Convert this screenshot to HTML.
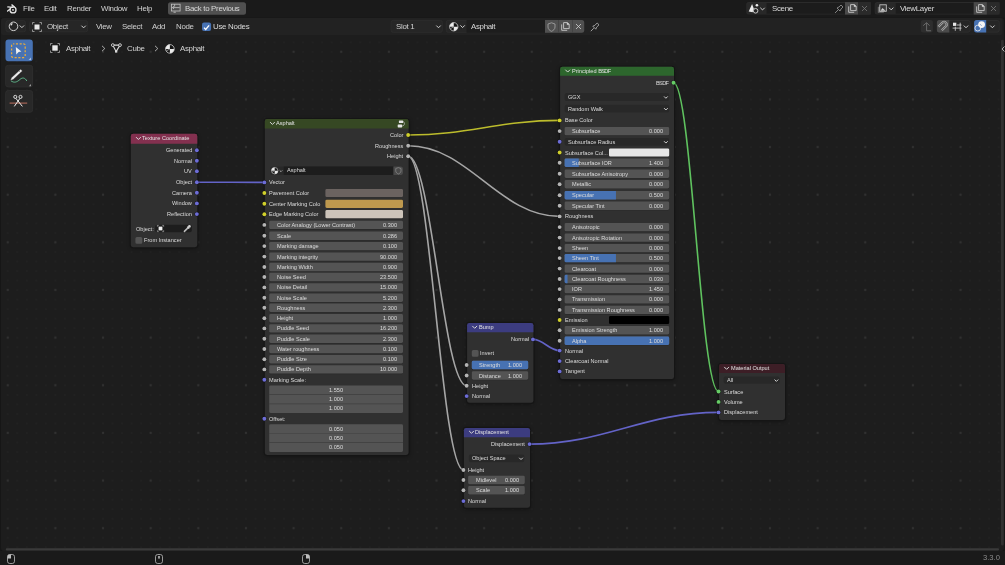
<!DOCTYPE html><html><head><meta charset="utf-8"><style>
html,body{margin:0;padding:0;width:1005px;height:565px;overflow:hidden;background:#1d1d1d}
body{position:relative;font-family:"Liberation Sans",sans-serif}
.t{position:absolute;white-space:nowrap;line-height:10px;height:10px;will-change:transform}
svg{position:absolute;overflow:visible}
</style></head><body>
<svg style="left:-6px;top:-6px" width="1017" height="577"><path d="M6.000 6.000 H1011.000 V571.000 H6.000 V6.000 Z" fill="#161616"/></svg>
<svg style="left:-5px;top:12px" width="1015" height="545"><path d="M9.000 6.000 H1006.000 A3 3 0 0 1 1009.000 9.000 V536.000 A3 3 0 0 1 1006.000 539.000 H9.000 A3 3 0 0 1 6.000 536.000 V9.000 A3 3 0 0 1 9.000 6.000 Z" fill="#1d1d1d"/></svg>
<svg style="left:0;top:0" width="1005" height="565"><defs>
<pattern id="gmin" x="2.996" y="-0.584" width="9.528" height="9.528" patternUnits="userSpaceOnUse"><circle cx="4.764" cy="4.764" r="0.8" fill="#242424"/></pattern>
<pattern id="gmaj" x="-16.06" y="-19.64" width="47.64" height="47.64" patternUnits="userSpaceOnUse"><circle cx="23.82" cy="23.82" r="1.15" fill="#313131"/></pattern>
</defs><rect x="2" y="36" width="1000" height="514" fill="url(#gmin)"/><rect x="2" y="36" width="1000" height="514" fill="url(#gmaj)"/></svg>
<svg style="left:-6px;top:-6px" width="1017" height="30"><path d="M6.000 6.000 H1011.000 V23.500 H6.000 V6.000 Z" fill="#1a1a1a"/></svg>
<svg style="left:-5px;top:12px" width="1014" height="30"><path d="M9.000 6.000 H1004.600 A3 3 0 0 1 1007.600 9.000 V20.300 A3 3 0 0 1 1004.600 23.300 H9.000 A3 3 0 0 1 6.000 20.300 V9.000 A3 3 0 0 1 9.000 6.000 Z" fill="#222222"/></svg>
<svg style="left:6.5px;top:3.5px" width="11" height="11" viewBox="0 0 11 11">
<circle cx="6.0" cy="5.9" r="3.0" fill="none" stroke="#e6e6e6" stroke-width="1.3"/>
<circle cx="6.0" cy="5.9" r="0.9" fill="#e6e6e6"/>
<path d="M4.9 0.9 L7.2 2.7 M0.8 2.95 L5.6 3.4 M0.6 7.0 L3.5 4.8" stroke="#e6e6e6" stroke-width="1.35" stroke-linecap="round"/>
</svg>
<div class="t" style="left:23.00px;top:3.60px;font-size:7.9px;color:#d2d2d2;letter-spacing:-0.3px;">File</div>
<div class="t" style="left:43.80px;top:3.60px;font-size:7.9px;color:#d2d2d2;letter-spacing:-0.3px;">Edit</div>
<div class="t" style="left:66.60px;top:3.60px;font-size:7.9px;color:#d2d2d2;letter-spacing:-0.3px;">Render</div>
<div class="t" style="left:100.60px;top:3.60px;font-size:7.9px;color:#d2d2d2;letter-spacing:-0.3px;">Window</div>
<div class="t" style="left:137.40px;top:3.60px;font-size:7.9px;color:#d2d2d2;letter-spacing:-0.3px;">Help</div>
<svg style="left:162px;top:-4px" width="90" height="25"><path d="M8.500 6.200 H81.500 A2.5 2.5 0 0 1 84.000 8.700 V16.200 A2.5 2.5 0 0 1 81.500 18.700 H8.500 A2.5 2.5 0 0 1 6.000 16.200 V8.700 A2.5 2.5 0 0 1 8.500 6.200 Z" fill="#505050"/></svg>
<svg style="left:170px;top:3px" width="12" height="12" viewBox="0 0 12 12">
<rect x="1.5" y="1.2" width="8.6" height="6.8" fill="none" stroke="#c4c4c4" stroke-width="0.8"/>
<path d="M4.6 1.2 V3.6 M2.3 4.6 H9.6 M4 3.2 L2.5 4.6 L4 6" fill="none" stroke="#c4c4c4" stroke-width="0.8"/>
<path d="M3.5 9.2 H5.8" stroke="#c4c4c4" stroke-width="0.9"/></svg>
<div class="t" style="left:184.90px;top:3.60px;font-size:7.9px;color:#d8d8d8;letter-spacing:-0.3px;">Back to Previous</div>
<svg style="left:740px;top:-4px" width="137" height="25"><path d="M8.800 6.100 H128.500 A2.5 2.5 0 0 1 131.000 8.600 V16.100 A2.5 2.5 0 0 1 128.500 18.600 H8.800 A2.5 2.5 0 0 1 6.300 16.100 V8.600 A2.5 2.5 0 0 1 8.800 6.100 Z" fill="#2b2b2b"/></svg>
<svg style="left:741px;top:-4px" width="136" height="24"><path d="M8.100 6.900 H127.200 A2 2 0 0 1 129.200 8.900 V15.800 A2 2 0 0 1 127.200 17.800 H8.100 A2 2 0 0 1 6.100 15.800 V8.900 A2 2 0 0 1 8.100 6.900 Z" fill="#282828"/></svg>
<svg style="left:760px;top:-4px" width="91" height="24"><path d="M6.500 6.900 H85.000 V17.800 H6.500 V6.900 Z" fill="#1c1c1c"/></svg>
<svg style="left:839px;top:-4px" width="25" height="25"><path d="M6.000 6.100 H19.000 V18.600 H6.000 V6.100 Z" fill="#4a4a4a"/></svg>
<svg style="left:852px;top:-4px" width="25" height="25"><path d="M6.000 6.100 H19.000 V18.600 H6.000 V6.100 Z" fill="#2a2a2a"/></svg>
<div class="t" style="left:771.50px;top:4.15px;font-size:7.9px;color:#dadada;letter-spacing:-0.3px;">Scene</div>
<svg style="left:852px;top:-4px" width="25" height="25"><path d="M6.000 6.100 H16.500 A2.5 2.5 0 0 1 19.000 8.600 V16.100 A2.5 2.5 0 0 1 16.500 18.600 H6.000 V6.100 Z" fill="#2a2a2a"/></svg>
<svg style="left:744px;top:0px" width="20" height="17">
<path d="M4.7 11.4 L8.1 4.0 L9.9 9 L8.6 12.2 Z" fill="#ececec"/>
<circle cx="12.9" cy="5.3" r="1.3" fill="#ececec"/>
<circle cx="11.6" cy="10.8" r="2.3" fill="#262626" stroke="#c8c8c8" stroke-width="1"/></svg>
<svg style="left:758px;top:5px" width="9" height="9"><path d="M2.600 3.050 L4.500 4.950 L6.400 3.050" fill="none" stroke="#cfcfcf" stroke-width="1.0" stroke-linecap="round" stroke-linejoin="round"/></svg>
<svg style="left:834px;top:3.5px" width="10" height="10" viewBox="0 0 10 10">
<path d="M1 9 L4 6 M3 4 L6 7 L7 5 L9 3 L7 1 L5 3 Z" fill="none" stroke="#9a9a9a" stroke-width="0.8"/></svg>
<svg style="left:847.5px;top:4px" width="9" height="9" viewBox="0 0 9 9">
<path d="M2.6 0.6 H6.4 L8.2 2.4 V6.6 H2.6 Z" fill="none" stroke="#d0d0d0" stroke-width="0.85"/>
<path d="M6.2 0.6 V2.6 H8.2" fill="#f0f0f0" stroke="#d0d0d0" stroke-width="0.6"/>
<path d="M0.7 2.4 V8.3 H6.2" fill="none" stroke="#d0d0d0" stroke-width="0.85"/></svg>
<svg style="left:861px;top:5px" width="7" height="7" viewBox="0 0 7 7">
<path d="M1 1 L6 6 M6 1 L1 6" stroke="#7a7a7a" stroke-width="0.8"/></svg>
<svg style="left:868px;top:-4px" width="138" height="25"><path d="M9.200 6.100 H129.100 A2.5 2.5 0 0 1 131.600 8.600 V16.100 A2.5 2.5 0 0 1 129.100 18.600 H9.200 A2.5 2.5 0 0 1 6.700 16.100 V8.600 A2.5 2.5 0 0 1 9.200 6.100 Z" fill="#2b2b2b"/></svg>
<svg style="left:869px;top:-4px" width="136" height="24"><path d="M8.500 6.900 H127.800 A2 2 0 0 1 129.800 8.900 V15.800 A2 2 0 0 1 127.800 17.800 H8.500 A2 2 0 0 1 6.500 15.800 V8.900 A2 2 0 0 1 8.500 6.900 Z" fill="#282828"/></svg>
<svg style="left:889px;top:-4px" width="91" height="24"><path d="M6.800 6.900 H84.700 V17.800 H6.800 V6.900 Z" fill="#1c1c1c"/></svg>
<svg style="left:967px;top:-4px" width="26" height="25"><path d="M6.700 6.100 H19.900 V18.600 H6.700 V6.100 Z" fill="#4a4a4a"/></svg>
<svg style="left:980px;top:-4px" width="26" height="25"><path d="M6.900 6.100 H19.600 V18.600 H6.900 V6.100 Z" fill="#2a2a2a"/></svg>
<div class="t" style="left:900.30px;top:4.15px;font-size:7.9px;color:#dadada;letter-spacing:-0.3px;">ViewLayer</div>
<svg style="left:877px;top:3.5px" width="11" height="10" viewBox="0 0 11 10">
<rect x="0.8" y="2.8" width="6" height="6" fill="#6a6a6a"/><rect x="2.8" y="0.8" width="6.5" height="6.5" fill="#3a3a3a" stroke="#cfcfcf" stroke-width="0.8"/>
<path d="M3.5 6.8 L5.5 4 L8.5 6.8Z" fill="#cfcfcf"/></svg>
<svg style="left:887px;top:4px" width="9" height="9"><path d="M2.300 3.950 L4.200 5.850 L6.100 3.950" fill="none" stroke="#d0d0d0" stroke-width="1.0" stroke-linecap="round" stroke-linejoin="round"/></svg>
<svg style="left:976px;top:4px" width="9" height="9" viewBox="0 0 9 9">
<path d="M2.6 0.6 H6.4 L8.2 2.4 V6.6 H2.6 Z" fill="none" stroke="#d0d0d0" stroke-width="0.85"/>
<path d="M6.2 0.6 V2.6 H8.2" fill="#f0f0f0" stroke="#d0d0d0" stroke-width="0.6"/>
<path d="M0.7 2.4 V8.3 H6.2" fill="none" stroke="#d0d0d0" stroke-width="0.85"/></svg>
<svg style="left:990px;top:5px" width="7" height="7" viewBox="0 0 7 7">
<path d="M1 1 L6 6 M6 1 L1 6" stroke="#7a7a7a" stroke-width="0.8"/></svg>
<svg style="left:-1px;top:14px" width="33" height="25"><path d="M9.100 6.300 H24.400 A2.5 2.5 0 0 1 26.900 8.800 V15.700 A2.5 2.5 0 0 1 24.400 18.200 H9.100 A2.5 2.5 0 0 1 6.600 15.700 V8.800 A2.5 2.5 0 0 1 9.100 6.300 Z" fill="#262626"/><path d="M9.100 6.650 H24.400 A2.15 2.15 0 0 1 26.550 8.800 V15.700 A2.15 2.15 0 0 1 24.400 17.850 H9.100 A2.15 2.15 0 0 1 6.950 15.700 V8.800 A2.15 2.15 0 0 1 9.100 6.650 Z" fill="none" stroke="#2e2e2e" stroke-width="0.7"/></svg>
<svg style="left:7.5px;top:21px" width="11" height="11" viewBox="0 0 11 11">
<circle cx="5.5" cy="5.3" r="4.3" fill="none" stroke="#d2d2d2" stroke-width="1"/>
<path d="M2.7 4.2 L4.3 2.4" stroke="#e6e6e6" stroke-width="1.4"/></svg>
<svg style="left:17px;top:22px" width="9" height="9"><path d="M3.000 3.750 L4.900 5.650 L6.800 3.750" fill="none" stroke="#d0d0d0" stroke-width="1.0" stroke-linecap="round" stroke-linejoin="round"/></svg>
<svg style="left:23px;top:14px" width="71" height="25"><path d="M9.000 6.300 H62.500 A2.5 2.5 0 0 1 65.000 8.800 V15.700 A2.5 2.5 0 0 1 62.500 18.200 H9.000 A2.5 2.5 0 0 1 6.500 15.700 V8.800 A2.5 2.5 0 0 1 9.000 6.300 Z" fill="#262626"/><path d="M9.000 6.650 H62.500 A2.15 2.15 0 0 1 64.650 8.800 V15.700 A2.15 2.15 0 0 1 62.500 17.850 H9.000 A2.15 2.15 0 0 1 6.850 15.700 V8.800 A2.15 2.15 0 0 1 9.000 6.650 Z" fill="none" stroke="#2e2e2e" stroke-width="0.7"/></svg>
<svg style="left:32px;top:21.5px" width="10" height="10" viewBox="0 0 10 10">
<path d="M0.5 2.5 V0.5 H2.5 M7.5 0.5 H9.5 V2.5 M9.5 7.5 V9.5 H7.5 M2.5 9.5 H0.5 V7.5" fill="none" stroke="#bdbdbd" stroke-width="0.7"/>
<rect x="2.5" y="2.5" width="5" height="5" fill="#e8e8e8"/></svg>
<div class="t" style="left:46.60px;top:22.00px;font-size:7.9px;color:#d0d0d0;letter-spacing:-0.3px;">Object</div>
<svg style="left:79px;top:22px" width="9" height="9"><path d="M2.700 3.950 L4.600 5.850 L6.500 3.950" fill="none" stroke="#d0d0d0" stroke-width="1.0" stroke-linecap="round" stroke-linejoin="round"/></svg>
<div class="t" style="left:95.80px;top:22.00px;font-size:7.9px;color:#d0d0d0;letter-spacing:-0.3px;">View</div>
<div class="t" style="left:121.90px;top:22.00px;font-size:7.9px;color:#d0d0d0;letter-spacing:-0.3px;">Select</div>
<div class="t" style="left:152.20px;top:22.00px;font-size:7.9px;color:#d0d0d0;letter-spacing:-0.3px;">Add</div>
<div class="t" style="left:175.60px;top:22.00px;font-size:7.9px;color:#d0d0d0;letter-spacing:-0.3px;">Node</div>
<svg style="left:196px;top:16px" width="22" height="21"><path d="M8.000 6.500 H13.100 A2 2 0 0 1 15.100 8.500 V13.000 A2 2 0 0 1 13.100 15.000 H8.000 A2 2 0 0 1 6.000 13.000 V8.500 A2 2 0 0 1 8.000 6.500 Z" fill="#4772b3"/></svg>
<svg style="left:202px;top:22.5px" width="9" height="9" viewBox="0 0 9 9">
<path d="M2 4.6 L3.7 6.4 L7.1 2.4" fill="none" stroke="#ffffff" stroke-width="1.35"/></svg>
<div class="t" style="left:213.00px;top:22.00px;font-size:7.9px;color:#dadada;letter-spacing:-0.3px;">Use Nodes</div>
<svg style="left:384px;top:14px" width="65" height="25"><path d="M9.200 6.000 H56.200 A2.5 2.5 0 0 1 58.700 8.500 V16.200 A2.5 2.5 0 0 1 56.200 18.700 H9.200 A2.5 2.5 0 0 1 6.700 16.200 V8.500 A2.5 2.5 0 0 1 9.200 6.000 Z" fill="#262626"/><path d="M9.200 6.350 H56.200 A2.15 2.15 0 0 1 58.350 8.500 V16.200 A2.15 2.15 0 0 1 56.200 18.350 H9.200 A2.15 2.15 0 0 1 7.050 16.200 V8.500 A2.15 2.15 0 0 1 9.200 6.350 Z" fill="none" stroke="#2e2e2e" stroke-width="0.7"/></svg>
<div class="t" style="left:395.50px;top:22.00px;font-size:7.9px;color:#d0d0d0;letter-spacing:-0.3px;">Slot 1</div>
<svg style="left:434px;top:22px" width="9" height="9"><path d="M2.600 3.850 L4.500 5.750 L6.400 3.850" fill="none" stroke="#d0d0d0" stroke-width="1.0" stroke-linecap="round" stroke-linejoin="round"/></svg>
<svg style="left:439px;top:14px" width="152" height="25"><path d="M9.400 6.000 H142.700 A2.5 2.5 0 0 1 145.200 8.500 V16.200 A2.5 2.5 0 0 1 142.700 18.700 H9.400 A2.5 2.5 0 0 1 6.900 16.200 V8.500 A2.5 2.5 0 0 1 9.400 6.000 Z" fill="#262626"/><path d="M9.400 6.350 H142.700 A2.15 2.15 0 0 1 144.850 8.500 V16.200 A2.15 2.15 0 0 1 142.700 18.350 H9.400 A2.15 2.15 0 0 1 7.250 16.200 V8.500 A2.15 2.15 0 0 1 9.400 6.350 Z" fill="none" stroke="#2e2e2e" stroke-width="0.7"/></svg>
<svg style="left:460px;top:14px" width="91" height="25"><path d="M6.600 6.000 H85.000 V18.700 H6.600 V6.000 Z" fill="#1d1d1d"/></svg>
<svg style="left:539px;top:14px" width="52" height="25"><path d="M6.000 6.000 H42.700 A2.5 2.5 0 0 1 45.200 8.500 V16.200 A2.5 2.5 0 0 1 42.700 18.700 H6.000 V6.000 Z" fill="#505050"/></svg>
<svg style="left:448.5px;top:21.8px" width="9.5" height="9.5" viewBox="0 0 10 10">
<circle cx="5" cy="5" r="4.4" fill="#151515"/>
<path d="M5 5 V0.6 A4.4 4.4 0 0 0 0.6 5 Z" fill="#ececec"/><path d="M5 5 H9.4 A4.4 4.4 0 0 1 5 9.4 Z" fill="#ececec"/>
<path d="M5 5 L1.3 7.2" stroke="#bbbbbb" stroke-width="0.7"/>
<circle cx="5" cy="5" r="4.4" fill="none" stroke="#d8d8d8" stroke-width="0.8"/></svg>
<svg style="left:458px;top:22px" width="9" height="9"><path d="M2.700 3.650 L4.600 5.550 L6.500 3.650" fill="none" stroke="#d0d0d0" stroke-width="1.0" stroke-linecap="round" stroke-linejoin="round"/></svg>
<div class="t" style="left:471.30px;top:22.00px;font-size:7.9px;color:#dadada;letter-spacing:-0.3px;">Asphalt</div>
<svg style="left:547.3px;top:21.5px" width="9.0" height="10.0" viewBox="0 0 9 10">
<path d="M4.5 0.8 L8 2 V5 C8 7.2 6.2 8.6 4.5 9.3 C2.8 8.6 1 7.2 1 5 V2 Z" fill="none" stroke="#a8a8a8" stroke-width="0.8"/></svg>
<div style="position:absolute;left:558.3px;top:20px;width:0.5px;height:12.7px;background:#444"></div>
<div style="position:absolute;left:571.5px;top:20px;width:0.5px;height:12.7px;background:#444"></div>
<svg style="left:560.5px;top:22px" width="9" height="9" viewBox="0 0 9 9">
<path d="M2.6 0.6 H6.4 L8.2 2.4 V6.6 H2.6 Z" fill="none" stroke="#d0d0d0" stroke-width="0.85"/>
<path d="M6.2 0.6 V2.6 H8.2" fill="#f0f0f0" stroke="#d0d0d0" stroke-width="0.6"/>
<path d="M0.7 2.4 V8.3 H6.2" fill="none" stroke="#d0d0d0" stroke-width="0.85"/></svg>
<svg style="left:574.5px;top:23px" width="7" height="7" viewBox="0 0 7 7">
<path d="M1 1 L6 6 M6 1 L1 6" stroke="#d0d0d0" stroke-width="0.8"/></svg>
<svg style="left:589.5px;top:21.5px" width="10" height="10" viewBox="0 0 10 10">
<path d="M0.8 9.2 L3.8 6.2 M2.8 4.2 L5.8 7.2 L6.6 5.2 L9 2.8 L7.2 1 L4.8 3.4 Z" fill="none" stroke="#bdbdbd" stroke-width="0.8"/></svg>
<svg style="left:914px;top:14px" width="25" height="25"><path d="M9.300 6.100 H16.400 A2.5 2.5 0 0 1 18.900 8.600 V16.000 A2.5 2.5 0 0 1 16.400 18.500 H9.300 A2.5 2.5 0 0 1 6.800 16.000 V8.600 A2.5 2.5 0 0 1 9.300 6.100 Z" fill="#2e2e2e"/></svg>
<svg style="left:915px;top:16px" width="20" height="20">
<path d="M11.6 7.2 V14.8 H15.7 M8.5 9.4 L11.6 6.7 L14.3 9.4" fill="none" stroke="#707070" stroke-width="0.9" stroke-linejoin="round" stroke-linecap="round"/></svg>
<svg style="left:930px;top:14px" width="47" height="25"><path d="M9.400 6.100 H38.000 A2.5 2.5 0 0 1 40.500 8.600 V16.000 A2.5 2.5 0 0 1 38.000 18.500 H9.400 A2.5 2.5 0 0 1 6.900 16.000 V8.600 A2.5 2.5 0 0 1 9.400 6.100 Z" fill="#262626"/><path d="M9.400 6.450 H38.000 A2.15 2.15 0 0 1 40.150 8.600 V16.000 A2.15 2.15 0 0 1 38.000 18.150 H9.400 A2.15 2.15 0 0 1 7.250 16.000 V8.600 A2.15 2.15 0 0 1 9.400 6.450 Z" fill="none" stroke="#303030" stroke-width="0.7"/></svg>
<svg style="left:930px;top:14px" width="26" height="25"><path d="M9.400 6.100 H19.300 V18.500 H9.400 A2.5 2.5 0 0 1 6.900 16.000 V8.600 A2.5 2.5 0 0 1 9.400 6.100 Z" fill="#4a4a4a"/></svg>
<svg style="left:935px;top:16px" width="20" height="20">
<path d="M3.33 10.73 L7.33 6.73 A2.5 2.5 0 0 1 10.87 10.27 L6.87 14.27" fill="none" stroke="#a8a8a8" stroke-width="2.3" stroke-linecap="butt"/>
<path d="M3.33 10.73 L7.33 6.73 A2.5 2.5 0 0 1 10.87 10.27 L6.87 14.27" fill="none" stroke="#4a4a4a" stroke-width="0.8" stroke-linecap="butt"/></svg>
<svg style="left:950px;top:20px" width="14" height="14">
<rect x="3" y="2.7" width="3.3" height="3.2" fill="#e6e6e6"/>
<path d="M5.3 6.7 V10.8 M10.2 2.7 V10.8 M7 5 H11.5 M2.6 8.1 H11.5" fill="none" stroke="#d0d0d0" stroke-width="0.85"/></svg>
<svg style="left:962px;top:22px" width="9" height="9"><path d="M2.100 3.850 L4.000 5.750 L5.900 3.850" fill="none" stroke="#d0d0d0" stroke-width="1.0" stroke-linecap="round" stroke-linejoin="round"/></svg>
<svg style="left:968px;top:14px" width="38" height="25"><path d="M8.600 6.100 H29.100 A2.5 2.5 0 0 1 31.600 8.600 V16.000 A2.5 2.5 0 0 1 29.100 18.500 H8.600 A2.5 2.5 0 0 1 6.100 16.000 V8.600 A2.5 2.5 0 0 1 8.600 6.100 Z" fill="#262626"/><path d="M8.600 6.450 H29.100 A2.15 2.15 0 0 1 31.250 8.600 V16.000 A2.15 2.15 0 0 1 29.100 18.150 H8.600 A2.15 2.15 0 0 1 6.450 16.000 V8.600 A2.15 2.15 0 0 1 8.600 6.450 Z" fill="none" stroke="#303030" stroke-width="0.7"/></svg>
<svg style="left:968px;top:14px" width="25" height="25"><path d="M8.600 6.100 H18.200 V18.500 H8.600 A2.5 2.5 0 0 1 6.100 16.000 V8.600 A2.5 2.5 0 0 1 8.600 6.100 Z" fill="#4772b3"/></svg>
<svg style="left:972px;top:18px" width="16" height="16">
<circle cx="5.8" cy="10.1" r="2.9" fill="none" stroke="#e8e8e8" stroke-width="0.85"/>
<circle cx="9.6" cy="6.6" r="3.4" fill="#f4f4f4"/>
<path d="M8.2 6.2 L9.6 7.8" stroke="#4772b3" stroke-width="0.6"/></svg>
<svg style="left:988px;top:22px" width="9" height="9"><path d="M2.500 3.850 L4.400 5.750 L6.300 3.850" fill="none" stroke="#d0d0d0" stroke-width="1.0" stroke-linecap="round" stroke-linejoin="round"/></svg>
<svg style="left:-1px;top:33px" width="40" height="35"><path d="M9.500 6.600 H30.800 A3 3 0 0 1 33.800 9.600 V25.300 A3 3 0 0 1 30.800 28.300 H9.500 A3 3 0 0 1 6.500 25.300 V9.600 A3 3 0 0 1 9.500 6.600 Z" fill="#4772b3"/></svg>
<svg style="left:8px;top:41.5px" width="24" height="19" viewBox="0 0 24 19">
<rect x="3.6" y="1.8" width="13.6" height="13.7" rx="1.6" fill="none" stroke="#e9ac3c" stroke-width="1.25" stroke-dasharray="2.1 1.6" stroke-dashoffset="1"/>
<path d="M7.8 5 L13.4 9.6 L10.6 9.9 L8.3 12.6 Z" fill="#f0f0f0"/>
<path d="M23 15.6 L20.6 18 H23 Z" fill="#a9c0e0"/></svg>
<svg style="left:-1px;top:58px" width="40" height="36"><path d="M9.300 6.900 H31.000 A3 3 0 0 1 34.000 9.900 V26.300 A3 3 0 0 1 31.000 29.300 H9.300 A3 3 0 0 1 6.300 26.300 V9.900 A3 3 0 0 1 9.300 6.900 Z" fill="#282828"/><path d="M9.300 7.250 H31.000 A2.65 2.65 0 0 1 33.650 9.900 V26.300 A2.65 2.65 0 0 1 31.000 28.950 H9.300 A2.65 2.65 0 0 1 6.650 26.300 V9.900 A2.65 2.65 0 0 1 9.300 7.250 Z" fill="none" stroke="#2f2f2f" stroke-width="0.7"/></svg>
<svg style="left:8px;top:66.5px" width="24" height="20" viewBox="0 0 24 20">
<path d="M3 13.8 C6 16.2 9 15.2 12 12.4 C14.5 10.2 17 10.6 18.8 14" fill="none" stroke="#5fb58a" stroke-width="1"/>
<path d="M2.5 13.2 L5.1 12.5 L14.3 4.0 L12.7 2.2 L3.5 10.7 Z" fill="#ececec" stroke="#3a3a3a" stroke-width="0.3"/>
<path d="M12.4 5.4 L11.2 4.1" stroke="#555" stroke-width="0.6"/>
<path d="M23 17 L20.8 19.2 H23 Z" fill="#9a9a9a"/></svg>
<svg style="left:-1px;top:84px" width="40" height="35"><path d="M9.300 6.200 H31.000 A3 3 0 0 1 34.000 9.200 V25.600 A3 3 0 0 1 31.000 28.600 H9.300 A3 3 0 0 1 6.300 25.600 V9.200 A3 3 0 0 1 9.300 6.200 Z" fill="#282828"/><path d="M9.300 6.550 H31.000 A2.65 2.65 0 0 1 33.650 9.200 V25.600 A2.65 2.65 0 0 1 31.000 28.250 H9.300 A2.65 2.65 0 0 1 6.650 25.600 V9.200 A2.65 2.65 0 0 1 9.300 6.550 Z" fill="none" stroke="#2f2f2f" stroke-width="0.7"/></svg>
<svg style="left:8px;top:92px" width="24" height="20" viewBox="0 0 24 20">
<path d="M1.6 11.1 H19.2" stroke="#b06a5a" stroke-width="1.1"/>
<circle cx="7.3" cy="4.9" r="1.55" fill="none" stroke="#eeeeee" stroke-width="0.9"/>
<circle cx="12.5" cy="4.9" r="1.55" fill="none" stroke="#eeeeee" stroke-width="0.9"/>
<path d="M7.9 6.4 L14.4 14.4 M11.9 6.4 L6.3 14.4" stroke="#eeeeee" stroke-width="1"/></svg>
<svg style="left:49.9px;top:43.2px" width="10" height="10" viewBox="0 0 10 10">
<path d="M0.5 2.5 V0.5 H2.5 M7.5 0.5 H9.5 V2.5 M9.5 7.5 V9.5 H7.5 M2.5 9.5 H0.5 V7.5" fill="none" stroke="#bdbdbd" stroke-width="0.7"/>
<rect x="2.3" y="2.3" width="5.4" height="5.4" fill="#e8e8e8"/></svg>
<div class="t" style="left:65.60px;top:44.00px;font-size:7.9px;color:#d4d4d4;letter-spacing:-0.3px;">Asphalt</div>
<svg style="left:100.5px;top:45px" width="5" height="7" viewBox="0 0 5 7"><path d="M1 0.8 L3.8 3.5 L1 6.2" fill="none" stroke="#cfcfcf" stroke-width="0.8"/></svg>
<svg style="left:110.7px;top:43px" width="11" height="11" viewBox="0 0 11 11">
<path d="M1.7 2.1 L9 2.1 L5.1 8.6 Z" fill="none" stroke="#d8d8d8" stroke-width="1.1" stroke-linejoin="round"/>
<circle cx="1.8" cy="2.1" r="1.4" fill="#1d1d1d" stroke="#d8d8d8" stroke-width="0.9"/>
<circle cx="9" cy="2.1" r="1.4" fill="#1d1d1d" stroke="#d8d8d8" stroke-width="0.9"/>
<rect x="4" y="7.6" width="2.3" height="2" fill="#d8d8d8"/></svg>
<div class="t" style="left:126.90px;top:44.00px;font-size:7.9px;color:#d4d4d4;letter-spacing:-0.3px;">Cube</div>
<svg style="left:154.3px;top:45px" width="5" height="7" viewBox="0 0 5 7"><path d="M1 0.8 L3.8 3.5 L1 6.2" fill="none" stroke="#cfcfcf" stroke-width="0.8"/></svg>
<svg style="left:164.5px;top:43.5px" width="9.8" height="9.8" viewBox="0 0 10 10">
<circle cx="5" cy="5" r="4.4" fill="#151515"/>
<path d="M5 5 V0.6 A4.4 4.4 0 0 0 0.6 5 Z" fill="#ececec"/><path d="M5 5 H9.4 A4.4 4.4 0 0 1 5 9.4 Z" fill="#ececec"/>
<path d="M5 5 L1.3 7.2" stroke="#bbbbbb" stroke-width="0.7"/>
<circle cx="5" cy="5" r="4.4" fill="none" stroke="#d8d8d8" stroke-width="0.8"/></svg>
<div class="t" style="left:179.70px;top:44.00px;font-size:7.9px;color:#d4d4d4;letter-spacing:-0.3px;">Asphalt</div>
<svg style="left:0;top:0" width="1005" height="565"><path d="M197.0 182.2 C223.94 182.2 237.41000000000003 182.4 264.35 182.4" fill="none" stroke="#6363c7" stroke-width="1.6"/><path d="M408.15 135 C468.75 135 499.04999999999995 120.4 559.65 120.4" fill="none" stroke="#bcbc2c" stroke-width="1.6"/><path d="M408.15 145.8 C468.75 145.8 499.04999999999995 216.4 559.65 216.4" fill="none" stroke="#a6a6a6" stroke-width="1.6"/><path d="M408.15 156.2 C431.54999999999995 156.2 443.25 385.7 466.65 385.7" fill="none" stroke="#a6a6a6" stroke-width="1.6"/><path d="M408.15 156.2 C430.27 156.2 441.33 470 463.45 470" fill="none" stroke="#a6a6a6" stroke-width="1.6"/><path d="M532.95 339.4 C543.63 339.4 548.97 350.6 559.65 350.6" fill="none" stroke="#6363c7" stroke-width="1.6"/><path d="M673.55 82.8 C691.55 82.8 700.55 391.5 718.55 391.5" fill="none" stroke="#5fc25f" stroke-width="1.6"/><path d="M529.55 444.1 C605.15 444.1 642.9499999999999 412.4 718.55 412.4" fill="none" stroke="#6363c7" stroke-width="1.6"/></svg>
<div style="position:absolute;left:130.80px;top:133.80px;width:66.50px;height:113.40px;border-radius:2.5px;box-shadow:0 1px 4px rgba(0,0,0,0.45)"></div>
<svg style="left:123px;top:126px" width="82" height="129"><path d="M10.100 6.700 H72.000 A3.4 3.4 0 0 1 75.400 10.100 V118.900 A3.4 3.4 0 0 1 72.000 122.300 H10.100 A3.4 3.4 0 0 1 6.700 118.900 V10.100 A3.4 3.4 0 0 1 10.100 6.700 Z" fill="#151515"/></svg>
<svg style="left:124px;top:127px" width="80" height="127"><path d="M9.200 6.800 H70.900 A2.4 2.4 0 0 1 73.300 9.200 V117.800 A2.4 2.4 0 0 1 70.900 120.200 H9.200 A2.4 2.4 0 0 1 6.800 117.800 V9.200 A2.4 2.4 0 0 1 9.200 6.800 Z" fill="#303030"/></svg>
<svg style="left:124px;top:127px" width="80" height="23"><path d="M9.200 6.800 H70.900 A2.4 2.4 0 0 1 73.300 9.200 V16.700 H6.800 V9.200 A2.4 2.4 0 0 1 9.200 6.800 Z" fill="#83304f"/></svg>
<svg style="left:134px;top:134px" width="9" height="9"><path d="M2.300 3.400 L4.400 5.500 L6.500 3.400" fill="none" stroke="#d8d8d8" stroke-width="1.0" stroke-linecap="round" stroke-linejoin="round"/></svg>
<div class="t" style="left:142.30px;top:133.05px;font-size:5.6px;color:#e2e2e2;">Texture Coordinate</div>
<div class="t" style="right:812.90px;top:145.30px;font-size:5.6px;color:#dcdcdc;text-align:right;">Generated</div>
<svg style="left:192px;top:146px" width="9" height="9"><circle cx="4.850" cy="4.300" r="2.35" fill="rgba(0,0,0,0.55)"/><circle cx="4.850" cy="4.300" r="1.95" fill="#6d6dd6"/></svg>
<div class="t" style="right:812.90px;top:155.70px;font-size:5.6px;color:#dcdcdc;text-align:right;">Normal</div>
<svg style="left:192px;top:156px" width="9" height="9"><circle cx="4.850" cy="4.700" r="2.35" fill="rgba(0,0,0,0.55)"/><circle cx="4.850" cy="4.700" r="1.95" fill="#6d6dd6"/></svg>
<div class="t" style="right:812.90px;top:166.30px;font-size:5.6px;color:#dcdcdc;text-align:right;">UV</div>
<svg style="left:192px;top:167px" width="9" height="9"><circle cx="4.850" cy="4.300" r="2.35" fill="rgba(0,0,0,0.55)"/><circle cx="4.850" cy="4.300" r="1.95" fill="#6d6dd6"/></svg>
<div class="t" style="right:812.90px;top:177.20px;font-size:5.6px;color:#dcdcdc;text-align:right;">Object</div>
<svg style="left:192px;top:178px" width="9" height="9"><circle cx="4.850" cy="4.200" r="2.35" fill="rgba(0,0,0,0.55)"/><circle cx="4.850" cy="4.200" r="1.95" fill="#6d6dd6"/></svg>
<div class="t" style="right:812.90px;top:187.80px;font-size:5.6px;color:#dcdcdc;text-align:right;">Camera</div>
<svg style="left:192px;top:188px" width="9" height="9"><circle cx="4.850" cy="4.800" r="2.35" fill="rgba(0,0,0,0.55)"/><circle cx="4.850" cy="4.800" r="1.95" fill="#6d6dd6"/></svg>
<div class="t" style="right:812.90px;top:198.40px;font-size:5.6px;color:#dcdcdc;text-align:right;">Window</div>
<svg style="left:192px;top:199px" width="9" height="9"><circle cx="4.850" cy="4.400" r="2.35" fill="rgba(0,0,0,0.55)"/><circle cx="4.850" cy="4.400" r="1.95" fill="#6d6dd6"/></svg>
<div class="t" style="right:812.90px;top:209.10px;font-size:5.6px;color:#dcdcdc;text-align:right;">Reflection</div>
<svg style="left:192px;top:210px" width="9" height="9"><circle cx="4.850" cy="4.100" r="2.35" fill="rgba(0,0,0,0.55)"/><circle cx="4.850" cy="4.100" r="1.95" fill="#6d6dd6"/></svg>
<div class="t" style="left:135.60px;top:223.50px;font-size:5.6px;color:#dcdcdc;">Object:</div>
<svg style="left:149px;top:218px" width="49" height="21"><path d="M8.200 6.700 H40.800 A2 2 0 0 1 42.800 8.700 V12.200 A2 2 0 0 1 40.800 14.200 H8.200 A2 2 0 0 1 6.200 12.200 V8.700 A2 2 0 0 1 8.200 6.700 Z" fill="#1d1d1d"/></svg>
<svg style="left:157px;top:225px" width="7" height="7" viewBox="0 0 10 10">
<path d="M0.5 2.5 V0.5 H2.5 M7.5 0.5 H9.5 V2.5 M9.5 7.5 V9.5 H7.5 M2.5 9.5 H0.5 V7.5" fill="none" stroke="#bdbdbd" stroke-width="0.9"/>
<rect x="2.3" y="2.3" width="5.4" height="5.4" fill="#f0f0f0"/></svg>
<svg style="left:182px;top:223px" width="10" height="10">
<path d="M2.4 8.4 L6.2 4.6" stroke="#bdbdbd" stroke-width="1.5" stroke-linecap="round"/>
<path d="M5.2 3.6 L7.2 5.6" stroke="#d6d6d6" stroke-width="1.2"/>
<circle cx="7.4" cy="3.4" r="1.35" fill="#d6d6d6"/></svg>
<svg style="left:129px;top:231px" width="20" height="19"><path d="M7.900 6.000 H11.800 A1.5 1.5 0 0 1 13.300 7.500 V11.200 A1.5 1.5 0 0 1 11.800 12.700 H7.900 A1.5 1.5 0 0 1 6.400 11.200 V7.500 A1.5 1.5 0 0 1 7.900 6.000 Z" fill="#545454"/></svg>
<div class="t" style="left:144.00px;top:235.40px;font-size:5.6px;color:#dcdcdc;">From Instancer</div>
<div style="position:absolute;left:264.80px;top:119.00px;width:143.80px;height:335.90px;border-radius:2.5px;box-shadow:0 1px 4px rgba(0,0,0,0.45)"></div>
<svg style="left:257px;top:111px" width="159" height="351"><path d="M10.100 6.900 H149.300 A3.4 3.4 0 0 1 152.700 10.300 V341.600 A3.4 3.4 0 0 1 149.300 345.000 H10.100 A3.4 3.4 0 0 1 6.700 341.600 V10.300 A3.4 3.4 0 0 1 10.100 6.900 Z" fill="#151515"/></svg>
<svg style="left:258px;top:113px" width="157" height="348"><path d="M9.200 6.000 H148.200 A2.4 2.4 0 0 1 150.600 8.400 V339.500 A2.4 2.4 0 0 1 148.200 341.900 H9.200 A2.4 2.4 0 0 1 6.800 339.500 V8.400 A2.4 2.4 0 0 1 9.200 6.000 Z" fill="#303030"/></svg>
<svg style="left:258px;top:113px" width="157" height="22"><path d="M9.200 6.000 H148.200 A2.4 2.4 0 0 1 150.600 8.400 V15.400 H6.800 V8.400 A2.4 2.4 0 0 1 9.200 6.000 Z" fill="#364823"/></svg>
<svg style="left:268px;top:119px" width="9" height="9"><path d="M2.300 3.350 L4.400 5.450 L6.500 3.350" fill="none" stroke="#d8d8d8" stroke-width="1.0" stroke-linecap="round" stroke-linejoin="round"/></svg>
<div class="t" style="left:276.30px;top:118.00px;font-size:5.6px;color:#e2e2e2;">Asphalt</div>
<svg style="left:397px;top:119.5px" width="8" height="8" viewBox="0 0 8 8">
<rect x="1.9" y="0.5" width="4.3" height="2.6" rx="0.6" fill="#e4e4e4"/><rect x="0.7" y="4.5" width="4.4" height="2.9" rx="0.6" fill="#e4e4e4"/>
<path d="M6.2 1.8 C8 1.8 8 6 5.1 6" fill="none" stroke="#cfcfcf" stroke-width="0.7"/></svg>
<div class="t" style="right:602.00px;top:130.00px;font-size:5.6px;color:#dcdcdc;text-align:right;">Color</div>
<svg style="left:404px;top:131px" width="9" height="9"><circle cx="4.150" cy="4.000" r="2.35" fill="rgba(0,0,0,0.55)"/><circle cx="4.150" cy="4.000" r="1.95" fill="#d0d02c"/></svg>
<div class="t" style="right:602.00px;top:140.80px;font-size:5.6px;color:#dcdcdc;text-align:right;">Roughness</div>
<svg style="left:404px;top:141px" width="9" height="9"><circle cx="4.150" cy="4.800" r="2.35" fill="rgba(0,0,0,0.55)"/><circle cx="4.150" cy="4.800" r="1.95" fill="#b4b4b4"/></svg>
<div class="t" style="right:602.00px;top:151.20px;font-size:5.6px;color:#dcdcdc;text-align:right;">Height</div>
<svg style="left:404px;top:152px" width="9" height="9"><circle cx="4.150" cy="4.200" r="2.35" fill="rgba(0,0,0,0.55)"/><circle cx="4.150" cy="4.200" r="1.95" fill="#b4b4b4"/></svg>
<svg style="left:264px;top:160px" width="145" height="21"><path d="M8.200 6.400 H137.000 A2 2 0 0 1 139.000 8.400 V12.900 A2 2 0 0 1 137.000 14.900 H8.200 A2 2 0 0 1 6.200 12.900 V8.400 A2 2 0 0 1 8.200 6.400 Z" fill="#282828"/></svg>
<svg style="left:277px;top:160px" width="123" height="21"><path d="M6.800 6.400 H116.400 V14.900 H6.800 V6.400 Z" fill="#1d1d1d"/></svg>
<svg style="left:387px;top:160px" width="22" height="21"><path d="M6.400 6.400 H14.000 A2 2 0 0 1 16.000 8.400 V12.900 A2 2 0 0 1 14.000 14.900 H6.400 V6.400 Z" fill="#4a4a4a"/></svg>
<svg style="left:270.9px;top:166.8px" width="7.4" height="7.4" viewBox="0 0 10 10">
<circle cx="5" cy="5" r="4.4" fill="#151515"/>
<path d="M5 5 V0.6 A4.4 4.4 0 0 0 0.6 5 Z" fill="#ececec"/><path d="M5 5 H9.4 A4.4 4.4 0 0 1 5 9.4 Z" fill="#ececec"/>
<path d="M5 5 L1.3 7.2" stroke="#bbbbbb" stroke-width="0.7"/>
<circle cx="5" cy="5" r="4.4" fill="none" stroke="#d8d8d8" stroke-width="0.8"/></svg>
<svg style="left:277px;top:167px" width="9" height="9"><path d="M3.000 3.700 L4.000 4.700 L5.000 3.700" fill="none" stroke="#cfcfcf" stroke-width="0.7" stroke-linecap="round" stroke-linejoin="round"/></svg>
<div class="t" style="left:286.80px;top:164.90px;font-size:5.6px;color:#dcdcdc;">Asphalt</div>
<svg style="left:395.4px;top:167.3px" width="6.75" height="7.5" viewBox="0 0 9 10">
<path d="M4.5 0.8 L8 2 V5 C8 7.2 6.2 8.6 4.5 9.3 C2.8 8.6 1 7.2 1 5 V2 Z" fill="none" stroke="#9a9a9a" stroke-width="0.8"/></svg>
<div class="t" style="left:269.10px;top:177.40px;font-size:5.6px;color:#dcdcdc;">Vector</div>
<svg style="left:260px;top:178px" width="9" height="9"><circle cx="4.350" cy="4.400" r="2.35" fill="rgba(0,0,0,0.55)"/><circle cx="4.350" cy="4.400" r="1.95" fill="#6d6dd6"/></svg>
<div class="t" style="left:269.10px;top:188.00px;font-size:5.6px;color:#dcdcdc;">Pavement Color</div>
<svg style="left:260px;top:189px" width="9" height="9"><circle cx="4.350" cy="4.000" r="2.35" fill="rgba(0,0,0,0.55)"/><circle cx="4.350" cy="4.000" r="1.95" fill="#d0d02c"/></svg>
<svg style="left:319px;top:182px" width="90" height="22"><path d="M7.800 6.900 H82.600 A1.4 1.4 0 0 1 84.000 8.300 V13.700 A1.4 1.4 0 0 1 82.600 15.100 H7.800 A1.4 1.4 0 0 1 6.400 13.700 V8.300 A1.4 1.4 0 0 1 7.800 6.900 Z" fill="#6b6360"/></svg>
<div class="t" style="left:269.10px;top:198.80px;font-size:5.6px;color:#dcdcdc;">Center Marking Colo</div>
<svg style="left:260px;top:199px" width="9" height="9"><circle cx="4.350" cy="4.800" r="2.35" fill="rgba(0,0,0,0.55)"/><circle cx="4.350" cy="4.800" r="1.95" fill="#d0d02c"/></svg>
<svg style="left:319px;top:193px" width="90" height="21"><path d="M7.800 6.700 H82.600 A1.4 1.4 0 0 1 84.000 8.100 V13.500 A1.4 1.4 0 0 1 82.600 14.900 H7.800 A1.4 1.4 0 0 1 6.400 13.500 V8.100 A1.4 1.4 0 0 1 7.800 6.700 Z" fill="#be994e"/></svg>
<div class="t" style="left:269.10px;top:209.20px;font-size:5.6px;color:#dcdcdc;">Edge Marking Color</div>
<svg style="left:260px;top:210px" width="9" height="9"><circle cx="4.350" cy="4.200" r="2.35" fill="rgba(0,0,0,0.55)"/><circle cx="4.350" cy="4.200" r="1.95" fill="#d0d02c"/></svg>
<svg style="left:319px;top:204px" width="90" height="21"><path d="M7.800 6.100 H82.600 A1.4 1.4 0 0 1 84.000 7.500 V12.900 A1.4 1.4 0 0 1 82.600 14.300 H7.800 A1.4 1.4 0 0 1 6.400 12.900 V7.500 A1.4 1.4 0 0 1 7.800 6.100 Z" fill="#cdc4ba"/></svg>
<svg style="left:260px;top:220px" width="9" height="9"><circle cx="4.350" cy="4.900" r="2.35" fill="rgba(0,0,0,0.55)"/><circle cx="4.350" cy="4.900" r="1.95" fill="#b4b4b4"/></svg>
<svg style="left:263px;top:214px" width="146" height="22"><path d="M7.600 7.300 H138.600 A1.4 1.4 0 0 1 140.000 8.700 V14.300 A1.4 1.4 0 0 1 138.600 15.700 H7.600 A1.4 1.4 0 0 1 6.200 14.300 V8.700 A1.4 1.4 0 0 1 7.600 7.300 Z" fill="#282828"/><path d="M7.600 6.700 H138.600 A1.4 1.4 0 0 1 140.000 8.100 V13.700 A1.4 1.4 0 0 1 138.600 15.100 H7.600 A1.4 1.4 0 0 1 6.200 13.700 V8.100 A1.4 1.4 0 0 1 7.600 6.700 Z" fill="#545454"/></svg>
<div class="t" style="left:276.80px;top:219.90px;font-size:5.6px;color:#dcdcdc;">Color Analogy (Lower Contrast)</div>
<div class="t" style="right:608.00px;top:219.90px;font-size:5.6px;color:#dcdcdc;text-align:right;">0.300</div>
<svg style="left:260px;top:231px" width="9" height="9"><circle cx="4.350" cy="4.700" r="2.35" fill="rgba(0,0,0,0.55)"/><circle cx="4.350" cy="4.700" r="1.95" fill="#b4b4b4"/></svg>
<svg style="left:263px;top:225px" width="146" height="21"><path d="M7.600 7.100 H138.600 A1.4 1.4 0 0 1 140.000 8.500 V14.100 A1.4 1.4 0 0 1 138.600 15.500 H7.600 A1.4 1.4 0 0 1 6.200 14.100 V8.500 A1.4 1.4 0 0 1 7.600 7.100 Z" fill="#282828"/><path d="M7.600 6.500 H138.600 A1.4 1.4 0 0 1 140.000 7.900 V13.500 A1.4 1.4 0 0 1 138.600 14.900 H7.600 A1.4 1.4 0 0 1 6.200 13.500 V7.900 A1.4 1.4 0 0 1 7.600 6.500 Z" fill="#545454"/></svg>
<div class="t" style="left:276.80px;top:230.70px;font-size:5.6px;color:#dcdcdc;">Scale</div>
<div class="t" style="right:608.00px;top:230.70px;font-size:5.6px;color:#dcdcdc;text-align:right;">0.286</div>
<svg style="left:260px;top:242px" width="9" height="9"><circle cx="4.350" cy="4.100" r="2.35" fill="rgba(0,0,0,0.55)"/><circle cx="4.350" cy="4.100" r="1.95" fill="#b4b4b4"/></svg>
<svg style="left:263px;top:235px" width="146" height="22"><path d="M7.600 7.500 H138.600 A1.4 1.4 0 0 1 140.000 8.900 V14.500 A1.4 1.4 0 0 1 138.600 15.900 H7.600 A1.4 1.4 0 0 1 6.200 14.500 V8.900 A1.4 1.4 0 0 1 7.600 7.500 Z" fill="#282828"/><path d="M7.600 6.900 H138.600 A1.4 1.4 0 0 1 140.000 8.300 V13.900 A1.4 1.4 0 0 1 138.600 15.300 H7.600 A1.4 1.4 0 0 1 6.200 13.900 V8.300 A1.4 1.4 0 0 1 7.600 6.900 Z" fill="#545454"/></svg>
<div class="t" style="left:276.80px;top:241.10px;font-size:5.6px;color:#dcdcdc;">Marking damage</div>
<div class="t" style="right:608.00px;top:241.10px;font-size:5.6px;color:#dcdcdc;text-align:right;">0.100</div>
<svg style="left:260px;top:252px" width="9" height="9"><circle cx="4.350" cy="4.600" r="2.35" fill="rgba(0,0,0,0.55)"/><circle cx="4.350" cy="4.600" r="1.95" fill="#b4b4b4"/></svg>
<svg style="left:263px;top:246px" width="146" height="21"><path d="M7.600 7.000 H138.600 A1.4 1.4 0 0 1 140.000 8.400 V14.000 A1.4 1.4 0 0 1 138.600 15.400 H7.600 A1.4 1.4 0 0 1 6.200 14.000 V8.400 A1.4 1.4 0 0 1 7.600 7.000 Z" fill="#282828"/><path d="M7.600 6.400 H138.600 A1.4 1.4 0 0 1 140.000 7.800 V13.400 A1.4 1.4 0 0 1 138.600 14.800 H7.600 A1.4 1.4 0 0 1 6.200 13.400 V7.800 A1.4 1.4 0 0 1 7.600 6.400 Z" fill="#545454"/></svg>
<div class="t" style="left:276.80px;top:251.60px;font-size:5.6px;color:#dcdcdc;">Marking integrity</div>
<div class="t" style="right:608.00px;top:251.60px;font-size:5.6px;color:#dcdcdc;text-align:right;">90.000</div>
<svg style="left:260px;top:263px" width="9" height="9"><circle cx="4.350" cy="4.000" r="2.35" fill="rgba(0,0,0,0.55)"/><circle cx="4.350" cy="4.000" r="1.95" fill="#b4b4b4"/></svg>
<svg style="left:263px;top:256px" width="146" height="22"><path d="M7.600 7.400 H138.600 A1.4 1.4 0 0 1 140.000 8.800 V14.400 A1.4 1.4 0 0 1 138.600 15.800 H7.600 A1.4 1.4 0 0 1 6.200 14.400 V8.800 A1.4 1.4 0 0 1 7.600 7.400 Z" fill="#282828"/><path d="M7.600 6.800 H138.600 A1.4 1.4 0 0 1 140.000 8.200 V13.800 A1.4 1.4 0 0 1 138.600 15.200 H7.600 A1.4 1.4 0 0 1 6.200 13.800 V8.200 A1.4 1.4 0 0 1 7.600 6.800 Z" fill="#545454"/></svg>
<div class="t" style="left:276.80px;top:262.00px;font-size:5.6px;color:#dcdcdc;">Marking Width</div>
<div class="t" style="right:608.00px;top:262.00px;font-size:5.6px;color:#dcdcdc;text-align:right;">0.900</div>
<svg style="left:260px;top:273px" width="9" height="9"><circle cx="4.350" cy="4.000" r="2.35" fill="rgba(0,0,0,0.55)"/><circle cx="4.350" cy="4.000" r="1.95" fill="#b4b4b4"/></svg>
<svg style="left:263px;top:266px" width="146" height="22"><path d="M7.600 7.400 H138.600 A1.4 1.4 0 0 1 140.000 8.800 V14.400 A1.4 1.4 0 0 1 138.600 15.800 H7.600 A1.4 1.4 0 0 1 6.200 14.400 V8.800 A1.4 1.4 0 0 1 7.600 7.400 Z" fill="#282828"/><path d="M7.600 6.800 H138.600 A1.4 1.4 0 0 1 140.000 8.200 V13.800 A1.4 1.4 0 0 1 138.600 15.200 H7.600 A1.4 1.4 0 0 1 6.200 13.800 V8.200 A1.4 1.4 0 0 1 7.600 6.800 Z" fill="#545454"/></svg>
<div class="t" style="left:276.80px;top:272.00px;font-size:5.6px;color:#dcdcdc;">Noise Seed</div>
<div class="t" style="right:608.00px;top:272.00px;font-size:5.6px;color:#dcdcdc;text-align:right;">23.500</div>
<svg style="left:260px;top:283px" width="9" height="9"><circle cx="4.350" cy="4.400" r="2.35" fill="rgba(0,0,0,0.55)"/><circle cx="4.350" cy="4.400" r="1.95" fill="#b4b4b4"/></svg>
<svg style="left:263px;top:277px" width="146" height="21"><path d="M7.600 6.800 H138.600 A1.4 1.4 0 0 1 140.000 8.200 V13.800 A1.4 1.4 0 0 1 138.600 15.200 H7.600 A1.4 1.4 0 0 1 6.200 13.800 V8.200 A1.4 1.4 0 0 1 7.600 6.800 Z" fill="#282828"/><path d="M7.600 6.200 H138.600 A1.4 1.4 0 0 1 140.000 7.600 V13.200 A1.4 1.4 0 0 1 138.600 14.600 H7.600 A1.4 1.4 0 0 1 6.200 13.200 V7.600 A1.4 1.4 0 0 1 7.600 6.200 Z" fill="#545454"/></svg>
<div class="t" style="left:276.80px;top:282.40px;font-size:5.6px;color:#dcdcdc;">Noise Detail</div>
<div class="t" style="right:608.00px;top:282.40px;font-size:5.6px;color:#dcdcdc;text-align:right;">15.000</div>
<svg style="left:260px;top:293px" width="9" height="9"><circle cx="4.350" cy="4.800" r="2.35" fill="rgba(0,0,0,0.55)"/><circle cx="4.350" cy="4.800" r="1.95" fill="#b4b4b4"/></svg>
<svg style="left:263px;top:287px" width="146" height="21"><path d="M7.600 7.200 H138.600 A1.4 1.4 0 0 1 140.000 8.600 V14.200 A1.4 1.4 0 0 1 138.600 15.600 H7.600 A1.4 1.4 0 0 1 6.200 14.200 V8.600 A1.4 1.4 0 0 1 7.600 7.200 Z" fill="#282828"/><path d="M7.600 6.600 H138.600 A1.4 1.4 0 0 1 140.000 8.000 V13.600 A1.4 1.4 0 0 1 138.600 15.000 H7.600 A1.4 1.4 0 0 1 6.200 13.600 V8.000 A1.4 1.4 0 0 1 7.600 6.600 Z" fill="#545454"/></svg>
<div class="t" style="left:276.80px;top:292.80px;font-size:5.6px;color:#dcdcdc;">Noise Scale</div>
<div class="t" style="right:608.00px;top:292.80px;font-size:5.6px;color:#dcdcdc;text-align:right;">5.200</div>
<svg style="left:260px;top:303px" width="9" height="9"><circle cx="4.350" cy="4.800" r="2.35" fill="rgba(0,0,0,0.55)"/><circle cx="4.350" cy="4.800" r="1.95" fill="#b4b4b4"/></svg>
<svg style="left:263px;top:297px" width="146" height="21"><path d="M7.600 7.200 H138.600 A1.4 1.4 0 0 1 140.000 8.600 V14.200 A1.4 1.4 0 0 1 138.600 15.600 H7.600 A1.4 1.4 0 0 1 6.200 14.200 V8.600 A1.4 1.4 0 0 1 7.600 7.200 Z" fill="#282828"/><path d="M7.600 6.600 H138.600 A1.4 1.4 0 0 1 140.000 8.000 V13.600 A1.4 1.4 0 0 1 138.600 15.000 H7.600 A1.4 1.4 0 0 1 6.200 13.600 V8.000 A1.4 1.4 0 0 1 7.600 6.600 Z" fill="#545454"/></svg>
<div class="t" style="left:276.80px;top:302.80px;font-size:5.6px;color:#dcdcdc;">Roughness</div>
<div class="t" style="right:608.00px;top:302.80px;font-size:5.6px;color:#dcdcdc;text-align:right;">2.300</div>
<svg style="left:260px;top:314px" width="9" height="9"><circle cx="4.350" cy="4.200" r="2.35" fill="rgba(0,0,0,0.55)"/><circle cx="4.350" cy="4.200" r="1.95" fill="#b4b4b4"/></svg>
<svg style="left:263px;top:308px" width="146" height="21"><path d="M7.600 6.600 H138.600 A1.4 1.4 0 0 1 140.000 8.000 V13.600 A1.4 1.4 0 0 1 138.600 15.000 H7.600 A1.4 1.4 0 0 1 6.200 13.600 V8.000 A1.4 1.4 0 0 1 7.600 6.600 Z" fill="#282828"/><path d="M7.600 6.000 H138.600 A1.4 1.4 0 0 1 140.000 7.400 V13.000 A1.4 1.4 0 0 1 138.600 14.400 H7.600 A1.4 1.4 0 0 1 6.200 13.000 V7.400 A1.4 1.4 0 0 1 7.600 6.000 Z" fill="#545454"/></svg>
<div class="t" style="left:276.80px;top:313.20px;font-size:5.6px;color:#dcdcdc;">Height</div>
<div class="t" style="right:608.00px;top:313.20px;font-size:5.6px;color:#dcdcdc;text-align:right;">1.000</div>
<svg style="left:260px;top:324px" width="9" height="9"><circle cx="4.350" cy="4.400" r="2.35" fill="rgba(0,0,0,0.55)"/><circle cx="4.350" cy="4.400" r="1.95" fill="#b4b4b4"/></svg>
<svg style="left:263px;top:318px" width="146" height="21"><path d="M7.600 6.800 H138.600 A1.4 1.4 0 0 1 140.000 8.200 V13.800 A1.4 1.4 0 0 1 138.600 15.200 H7.600 A1.4 1.4 0 0 1 6.200 13.800 V8.200 A1.4 1.4 0 0 1 7.600 6.800 Z" fill="#282828"/><path d="M7.600 6.200 H138.600 A1.4 1.4 0 0 1 140.000 7.600 V13.200 A1.4 1.4 0 0 1 138.600 14.600 H7.600 A1.4 1.4 0 0 1 6.200 13.200 V7.600 A1.4 1.4 0 0 1 7.600 6.200 Z" fill="#545454"/></svg>
<div class="t" style="left:276.80px;top:323.40px;font-size:5.6px;color:#dcdcdc;">Puddle Seed</div>
<div class="t" style="right:608.00px;top:323.40px;font-size:5.6px;color:#dcdcdc;text-align:right;">16.200</div>
<svg style="left:260px;top:334px" width="9" height="9"><circle cx="4.350" cy="4.800" r="2.35" fill="rgba(0,0,0,0.55)"/><circle cx="4.350" cy="4.800" r="1.95" fill="#b4b4b4"/></svg>
<svg style="left:263px;top:328px" width="146" height="21"><path d="M7.600 7.200 H138.600 A1.4 1.4 0 0 1 140.000 8.600 V14.200 A1.4 1.4 0 0 1 138.600 15.600 H7.600 A1.4 1.4 0 0 1 6.200 14.200 V8.600 A1.4 1.4 0 0 1 7.600 7.200 Z" fill="#282828"/><path d="M7.600 6.600 H138.600 A1.4 1.4 0 0 1 140.000 8.000 V13.600 A1.4 1.4 0 0 1 138.600 15.000 H7.600 A1.4 1.4 0 0 1 6.200 13.600 V8.000 A1.4 1.4 0 0 1 7.600 6.600 Z" fill="#545454"/></svg>
<div class="t" style="left:276.80px;top:333.80px;font-size:5.6px;color:#dcdcdc;">Puddle Scale</div>
<div class="t" style="right:608.00px;top:333.80px;font-size:5.6px;color:#dcdcdc;text-align:right;">2.300</div>
<svg style="left:260px;top:345px" width="9" height="9"><circle cx="4.350" cy="4.000" r="2.35" fill="rgba(0,0,0,0.55)"/><circle cx="4.350" cy="4.000" r="1.95" fill="#b4b4b4"/></svg>
<svg style="left:263px;top:338px" width="146" height="22"><path d="M7.600 7.400 H138.600 A1.4 1.4 0 0 1 140.000 8.800 V14.400 A1.4 1.4 0 0 1 138.600 15.800 H7.600 A1.4 1.4 0 0 1 6.200 14.400 V8.800 A1.4 1.4 0 0 1 7.600 7.400 Z" fill="#282828"/><path d="M7.600 6.800 H138.600 A1.4 1.4 0 0 1 140.000 8.200 V13.800 A1.4 1.4 0 0 1 138.600 15.200 H7.600 A1.4 1.4 0 0 1 6.200 13.800 V8.200 A1.4 1.4 0 0 1 7.600 6.800 Z" fill="#545454"/></svg>
<div class="t" style="left:276.80px;top:344.00px;font-size:5.6px;color:#dcdcdc;">Water roughness</div>
<div class="t" style="right:608.00px;top:344.00px;font-size:5.6px;color:#dcdcdc;text-align:right;">0.100</div>
<svg style="left:260px;top:355px" width="9" height="9"><circle cx="4.350" cy="4.200" r="2.35" fill="rgba(0,0,0,0.55)"/><circle cx="4.350" cy="4.200" r="1.95" fill="#b4b4b4"/></svg>
<svg style="left:263px;top:349px" width="146" height="21"><path d="M7.600 6.600 H138.600 A1.4 1.4 0 0 1 140.000 8.000 V13.600 A1.4 1.4 0 0 1 138.600 15.000 H7.600 A1.4 1.4 0 0 1 6.200 13.600 V8.000 A1.4 1.4 0 0 1 7.600 6.600 Z" fill="#282828"/><path d="M7.600 6.000 H138.600 A1.4 1.4 0 0 1 140.000 7.400 V13.000 A1.4 1.4 0 0 1 138.600 14.400 H7.600 A1.4 1.4 0 0 1 6.200 13.000 V7.400 A1.4 1.4 0 0 1 7.600 6.000 Z" fill="#545454"/></svg>
<div class="t" style="left:276.80px;top:354.20px;font-size:5.6px;color:#dcdcdc;">Puddle Size</div>
<div class="t" style="right:608.00px;top:354.20px;font-size:5.6px;color:#dcdcdc;text-align:right;">0.100</div>
<svg style="left:260px;top:365px" width="9" height="9"><circle cx="4.350" cy="4.400" r="2.35" fill="rgba(0,0,0,0.55)"/><circle cx="4.350" cy="4.400" r="1.95" fill="#b4b4b4"/></svg>
<svg style="left:263px;top:359px" width="146" height="21"><path d="M7.600 6.800 H138.600 A1.4 1.4 0 0 1 140.000 8.200 V13.800 A1.4 1.4 0 0 1 138.600 15.200 H7.600 A1.4 1.4 0 0 1 6.200 13.800 V8.200 A1.4 1.4 0 0 1 7.600 6.800 Z" fill="#282828"/><path d="M7.600 6.200 H138.600 A1.4 1.4 0 0 1 140.000 7.600 V13.200 A1.4 1.4 0 0 1 138.600 14.600 H7.600 A1.4 1.4 0 0 1 6.200 13.200 V7.600 A1.4 1.4 0 0 1 7.600 6.200 Z" fill="#545454"/></svg>
<div class="t" style="left:276.80px;top:364.40px;font-size:5.6px;color:#dcdcdc;">Puddle Depth</div>
<div class="t" style="right:608.00px;top:364.40px;font-size:5.6px;color:#dcdcdc;text-align:right;">10.000</div>
<div class="t" style="left:269.10px;top:374.80px;font-size:5.6px;color:#dcdcdc;">Marking Scale:</div>
<svg style="left:260px;top:375px" width="9" height="9"><circle cx="4.350" cy="4.800" r="2.35" fill="rgba(0,0,0,0.55)"/><circle cx="4.350" cy="4.800" r="1.95" fill="#6d6dd6"/></svg>
<svg style="left:263px;top:379px" width="146" height="40"><path d="M7.600 6.400 H138.600 A1.4 1.4 0 0 1 140.000 7.800 V32.600 A1.4 1.4 0 0 1 138.600 34.000 H7.600 A1.4 1.4 0 0 1 6.200 32.600 V7.800 A1.4 1.4 0 0 1 7.600 6.400 Z" fill="#545454"/></svg>
<svg style="left:263px;top:388px" width="146" height="13"><path d="M6.200 6.250 H140.000 V6.950 H6.200 V6.250 Z" fill="#3e3e3e"/></svg>
<svg style="left:263px;top:397px" width="146" height="14"><path d="M6.200 6.450 H140.000 V7.150 H6.200 V6.450 Z" fill="#3e3e3e"/></svg>
<div class="t" style="left:236.30px;width:200px;top:385.00px;font-size:5.6px;color:#dcdcdc;text-align:center;">1.550</div>
<div class="t" style="left:236.30px;width:200px;top:394.20px;font-size:5.6px;color:#dcdcdc;text-align:center;">1.000</div>
<div class="t" style="left:236.30px;width:200px;top:403.40px;font-size:5.6px;color:#dcdcdc;text-align:center;">1.000</div>
<div class="t" style="left:269.10px;top:413.70px;font-size:5.6px;color:#dcdcdc;">Offset:</div>
<svg style="left:260px;top:414px" width="9" height="9"><circle cx="4.350" cy="4.700" r="2.35" fill="rgba(0,0,0,0.55)"/><circle cx="4.350" cy="4.700" r="1.95" fill="#6d6dd6"/></svg>
<svg style="left:263px;top:418px" width="146" height="40"><path d="M7.600 6.300 H138.600 A1.4 1.4 0 0 1 140.000 7.700 V32.500 A1.4 1.4 0 0 1 138.600 33.900 H7.600 A1.4 1.4 0 0 1 6.200 32.500 V7.700 A1.4 1.4 0 0 1 7.600 6.300 Z" fill="#545454"/></svg>
<svg style="left:263px;top:427px" width="146" height="13"><path d="M6.200 6.150 H140.000 V6.850 H6.200 V6.150 Z" fill="#3e3e3e"/></svg>
<svg style="left:263px;top:436px" width="146" height="14"><path d="M6.200 6.350 H140.000 V7.050 H6.200 V6.350 Z" fill="#3e3e3e"/></svg>
<div class="t" style="left:236.30px;width:200px;top:423.90px;font-size:5.6px;color:#dcdcdc;text-align:center;">0.050</div>
<div class="t" style="left:236.30px;width:200px;top:433.10px;font-size:5.6px;color:#dcdcdc;text-align:center;">0.050</div>
<div class="t" style="left:236.30px;width:200px;top:442.30px;font-size:5.6px;color:#dcdcdc;text-align:center;">0.050</div>
<div style="position:absolute;left:560.10px;top:66.80px;width:113.90px;height:312.30px;border-radius:2.5px;box-shadow:0 1px 4px rgba(0,0,0,0.45)"></div>
<svg style="left:553px;top:59px" width="129" height="328"><path d="M9.400 6.700 H118.700 A3.4 3.4 0 0 1 122.100 10.100 V317.800 A3.4 3.4 0 0 1 118.700 321.200 H9.400 A3.4 3.4 0 0 1 6.000 317.800 V10.100 A3.4 3.4 0 0 1 9.400 6.700 Z" fill="#151515"/></svg>
<svg style="left:554px;top:60px" width="126" height="326"><path d="M8.500 6.800 H117.600 A2.4 2.4 0 0 1 120.000 9.200 V316.700 A2.4 2.4 0 0 1 117.600 319.100 H8.500 A2.4 2.4 0 0 1 6.100 316.700 V9.200 A2.4 2.4 0 0 1 8.500 6.800 Z" fill="#303030"/></svg>
<svg style="left:554px;top:60px" width="126" height="22"><path d="M8.500 6.800 H117.600 A2.4 2.4 0 0 1 120.000 9.200 V15.800 H6.100 V9.200 A2.4 2.4 0 0 1 8.500 6.800 Z" fill="#2d662d"/></svg>
<svg style="left:563px;top:67px" width="9" height="9"><path d="M2.600 2.950 L4.700 5.050 L6.800 2.950" fill="none" stroke="#d8d8d8" stroke-width="1.0" stroke-linecap="round" stroke-linejoin="round"/></svg>
<div class="t" style="left:571.60px;top:65.60px;font-size:5.6px;color:#e2e2e2;">Principled <span style="letter-spacing:-0.65px">BSDF</span></div>
<div class="t" style="right:336.70px;top:77.80px;font-size:5.6px;color:#dcdcdc;text-align:right;letter-spacing:-0.65px">BSDF</div>
<svg style="left:669px;top:78px" width="9" height="9"><circle cx="4.550" cy="4.800" r="2.35" fill="rgba(0,0,0,0.55)"/><circle cx="4.550" cy="4.800" r="1.95" fill="#66cc66"/></svg>
<svg style="left:558px;top:87px" width="118" height="20"><path d="M8.600 6.100 H109.200 A2 2 0 0 1 111.200 8.100 V11.900 A2 2 0 0 1 109.200 13.900 H8.600 A2 2 0 0 1 6.600 11.900 V8.100 A2 2 0 0 1 8.600 6.100 Z" fill="#282828"/></svg>
<div class="t" style="left:568.10px;top:92.00px;font-size:5.6px;color:#dcdcdc;">GGX</div>
<svg style="left:661px;top:93px" width="9" height="9"><path d="M3.350 3.725 L4.900 5.275 L6.450 3.725" fill="none" stroke="#d0d0d0" stroke-width="1.0" stroke-linecap="round" stroke-linejoin="round"/></svg>
<svg style="left:558px;top:98px" width="118" height="21"><path d="M8.600 6.800 H109.200 A2 2 0 0 1 111.200 8.800 V12.600 A2 2 0 0 1 109.200 14.600 H8.600 A2 2 0 0 1 6.600 12.600 V8.800 A2 2 0 0 1 8.600 6.800 Z" fill="#282828"/></svg>
<div class="t" style="left:568.10px;top:103.70px;font-size:5.6px;color:#dcdcdc;">Random Walk</div>
<svg style="left:661px;top:105px" width="9" height="9"><path d="M3.350 3.425 L4.900 4.975 L6.450 3.425" fill="none" stroke="#d0d0d0" stroke-width="1.0" stroke-linecap="round" stroke-linejoin="round"/></svg>
<svg style="left:555px;top:116px" width="9" height="9"><circle cx="4.650" cy="4.400" r="2.35" fill="rgba(0,0,0,0.55)"/><circle cx="4.650" cy="4.400" r="1.95" fill="#d0d02c"/></svg>
<div class="t" style="left:564.60px;top:115.40px;font-size:5.6px;color:#dcdcdc;">Base Color</div>
<svg style="left:555px;top:127px" width="9" height="9"><circle cx="4.650" cy="4.100" r="2.35" fill="rgba(0,0,0,0.55)"/><circle cx="4.650" cy="4.100" r="1.95" fill="#b4b4b4"/></svg>
<svg style="left:558px;top:120px" width="118" height="22"><path d="M8.000 7.500 H109.800 A1.4 1.4 0 0 1 111.200 8.900 V14.500 A1.4 1.4 0 0 1 109.800 15.900 H8.000 A1.4 1.4 0 0 1 6.600 14.500 V8.900 A1.4 1.4 0 0 1 8.000 7.500 Z" fill="#282828"/><path d="M8.000 6.900 H109.800 A1.4 1.4 0 0 1 111.200 8.300 V13.900 A1.4 1.4 0 0 1 109.800 15.300 H8.000 A1.4 1.4 0 0 1 6.600 13.900 V8.300 A1.4 1.4 0 0 1 8.000 6.900 Z" fill="#545454"/></svg>
<div class="t" style="left:572.20px;top:126.10px;font-size:5.6px;color:#dcdcdc;">Subsurface</div>
<div class="t" style="right:341.80px;top:126.10px;font-size:5.6px;color:#dcdcdc;text-align:right;">0.000</div>
<svg style="left:555px;top:137px" width="9" height="9"><circle cx="4.650" cy="4.800" r="2.35" fill="rgba(0,0,0,0.55)"/><circle cx="4.650" cy="4.800" r="1.95" fill="#6d6dd6"/></svg>
<svg style="left:558px;top:131px" width="118" height="21"><path d="M8.600 6.900 H109.200 A2 2 0 0 1 111.200 8.900 V12.700 A2 2 0 0 1 109.200 14.700 H8.600 A2 2 0 0 1 6.600 12.700 V8.900 A2 2 0 0 1 8.600 6.900 Z" fill="#282828"/></svg>
<div class="t" style="left:568.10px;top:136.80px;font-size:5.6px;color:#dcdcdc;">Subsurface Radius</div>
<svg style="left:661px;top:138px" width="9" height="9"><path d="M3.350 3.525 L4.900 5.075 L6.450 3.525" fill="none" stroke="#d0d0d0" stroke-width="1.0" stroke-linecap="round" stroke-linejoin="round"/></svg>
<svg style="left:555px;top:148px" width="9" height="9"><circle cx="4.650" cy="4.500" r="2.35" fill="rgba(0,0,0,0.55)"/><circle cx="4.650" cy="4.500" r="1.95" fill="#d0d02c"/></svg>
<div class="t" style="left:564.60px;top:147.50px;font-size:5.6px;color:#dcdcdc;">Subsurface Col...</div>
<svg style="left:603px;top:142px" width="73" height="21"><path d="M7.400 6.400 H64.800 A1.4 1.4 0 0 1 66.200 7.800 V13.200 A1.4 1.4 0 0 1 64.800 14.600 H7.400 A1.4 1.4 0 0 1 6.000 13.200 V7.800 A1.4 1.4 0 0 1 7.400 6.400 Z" fill="#e6e6e6"/></svg>
<svg style="left:555px;top:158px" width="9" height="9"><circle cx="4.650" cy="4.800" r="2.35" fill="rgba(0,0,0,0.55)"/><circle cx="4.650" cy="4.800" r="1.95" fill="#b4b4b4"/></svg>
<svg style="left:558px;top:152px" width="118" height="22"><path d="M8.000 7.200 H109.800 A1.4 1.4 0 0 1 111.200 8.600 V14.200 A1.4 1.4 0 0 1 109.800 15.600 H8.000 A1.4 1.4 0 0 1 6.600 14.200 V8.600 A1.4 1.4 0 0 1 8.000 7.200 Z" fill="#282828"/><path d="M8.000 6.600 H109.800 A1.4 1.4 0 0 1 111.200 8.000 V13.600 A1.4 1.4 0 0 1 109.800 15.000 H8.000 A1.4 1.4 0 0 1 6.600 13.600 V8.000 A1.4 1.4 0 0 1 8.000 6.600 Z" fill="#545454"/></svg>
<svg style="left:558px;top:152px" width="27" height="22"><path d="M8.000 6.600 H20.721 V15.000 H8.000 A1.4 1.4 0 0 1 6.600 13.600 V8.000 A1.4 1.4 0 0 1 8.000 6.600 Z" fill="#4772b3"/></svg>
<div class="t" style="left:572.20px;top:157.80px;font-size:5.6px;color:#dcdcdc;">Subsurface IOR</div>
<div class="t" style="right:341.80px;top:157.80px;font-size:5.6px;color:#dcdcdc;text-align:right;">1.400</div>
<svg style="left:555px;top:169px" width="9" height="9"><circle cx="4.650" cy="4.800" r="2.35" fill="rgba(0,0,0,0.55)"/><circle cx="4.650" cy="4.800" r="1.95" fill="#b4b4b4"/></svg>
<svg style="left:558px;top:163px" width="118" height="22"><path d="M8.000 7.200 H109.800 A1.4 1.4 0 0 1 111.200 8.600 V14.200 A1.4 1.4 0 0 1 109.800 15.600 H8.000 A1.4 1.4 0 0 1 6.600 14.200 V8.600 A1.4 1.4 0 0 1 8.000 7.200 Z" fill="#282828"/><path d="M8.000 6.600 H109.800 A1.4 1.4 0 0 1 111.200 8.000 V13.600 A1.4 1.4 0 0 1 109.800 15.000 H8.000 A1.4 1.4 0 0 1 6.600 13.600 V8.000 A1.4 1.4 0 0 1 8.000 6.600 Z" fill="#545454"/></svg>
<div class="t" style="left:572.20px;top:168.80px;font-size:5.6px;color:#dcdcdc;">Subsurface Anisotropy</div>
<div class="t" style="right:341.80px;top:168.80px;font-size:5.6px;color:#dcdcdc;text-align:right;">0.000</div>
<svg style="left:555px;top:180px" width="9" height="9"><circle cx="4.650" cy="4.300" r="2.35" fill="rgba(0,0,0,0.55)"/><circle cx="4.650" cy="4.300" r="1.95" fill="#b4b4b4"/></svg>
<svg style="left:558px;top:174px" width="118" height="21"><path d="M8.000 6.700 H109.800 A1.4 1.4 0 0 1 111.200 8.100 V13.700 A1.4 1.4 0 0 1 109.800 15.100 H8.000 A1.4 1.4 0 0 1 6.600 13.700 V8.100 A1.4 1.4 0 0 1 8.000 6.700 Z" fill="#282828"/><path d="M8.000 6.100 H109.800 A1.4 1.4 0 0 1 111.200 7.500 V13.100 A1.4 1.4 0 0 1 109.800 14.500 H8.000 A1.4 1.4 0 0 1 6.600 13.100 V7.500 A1.4 1.4 0 0 1 8.000 6.100 Z" fill="#545454"/></svg>
<div class="t" style="left:572.20px;top:179.30px;font-size:5.6px;color:#dcdcdc;">Metallic</div>
<div class="t" style="right:341.80px;top:179.30px;font-size:5.6px;color:#dcdcdc;text-align:right;">0.000</div>
<svg style="left:555px;top:191px" width="9" height="9"><circle cx="4.650" cy="4.200" r="2.35" fill="rgba(0,0,0,0.55)"/><circle cx="4.650" cy="4.200" r="1.95" fill="#b4b4b4"/></svg>
<svg style="left:558px;top:185px" width="118" height="21"><path d="M8.000 6.600 H109.800 A1.4 1.4 0 0 1 111.200 8.000 V13.600 A1.4 1.4 0 0 1 109.800 15.000 H8.000 A1.4 1.4 0 0 1 6.600 13.600 V8.000 A1.4 1.4 0 0 1 8.000 6.600 Z" fill="#282828"/><path d="M8.000 6.000 H109.800 A1.4 1.4 0 0 1 111.200 7.400 V13.000 A1.4 1.4 0 0 1 109.800 14.400 H8.000 A1.4 1.4 0 0 1 6.600 13.000 V7.400 A1.4 1.4 0 0 1 8.000 6.000 Z" fill="#545454"/></svg>
<svg style="left:558px;top:185px" width="64" height="21"><path d="M8.000 6.000 H57.959 V14.400 H8.000 A1.4 1.4 0 0 1 6.600 13.000 V7.400 A1.4 1.4 0 0 1 8.000 6.000 Z" fill="#4772b3"/></svg>
<div class="t" style="left:572.20px;top:190.20px;font-size:5.6px;color:#dcdcdc;">Specular</div>
<div class="t" style="right:341.80px;top:190.20px;font-size:5.6px;color:#dcdcdc;text-align:right;">0.500</div>
<svg style="left:555px;top:201px" width="9" height="9"><circle cx="4.650" cy="4.700" r="2.35" fill="rgba(0,0,0,0.55)"/><circle cx="4.650" cy="4.700" r="1.95" fill="#b4b4b4"/></svg>
<svg style="left:558px;top:195px" width="118" height="21"><path d="M8.000 7.100 H109.800 A1.4 1.4 0 0 1 111.200 8.500 V14.100 A1.4 1.4 0 0 1 109.800 15.500 H8.000 A1.4 1.4 0 0 1 6.600 14.100 V8.500 A1.4 1.4 0 0 1 8.000 7.100 Z" fill="#282828"/><path d="M8.000 6.500 H109.800 A1.4 1.4 0 0 1 111.200 7.900 V13.500 A1.4 1.4 0 0 1 109.800 14.900 H8.000 A1.4 1.4 0 0 1 6.600 13.500 V7.900 A1.4 1.4 0 0 1 8.000 6.500 Z" fill="#545454"/></svg>
<div class="t" style="left:572.20px;top:200.70px;font-size:5.6px;color:#dcdcdc;">Specular Tint</div>
<div class="t" style="right:341.80px;top:200.70px;font-size:5.6px;color:#dcdcdc;text-align:right;">0.000</div>
<svg style="left:555px;top:212px" width="9" height="9"><circle cx="4.650" cy="4.400" r="2.35" fill="rgba(0,0,0,0.55)"/><circle cx="4.650" cy="4.400" r="1.95" fill="#b4b4b4"/></svg>
<div class="t" style="left:564.60px;top:211.40px;font-size:5.6px;color:#dcdcdc;">Roughness</div>
<svg style="left:555px;top:223px" width="9" height="9"><circle cx="4.650" cy="4.100" r="2.35" fill="rgba(0,0,0,0.55)"/><circle cx="4.650" cy="4.100" r="1.95" fill="#b4b4b4"/></svg>
<svg style="left:558px;top:216px" width="118" height="22"><path d="M8.000 7.500 H109.800 A1.4 1.4 0 0 1 111.200 8.900 V14.500 A1.4 1.4 0 0 1 109.800 15.900 H8.000 A1.4 1.4 0 0 1 6.600 14.500 V8.900 A1.4 1.4 0 0 1 8.000 7.500 Z" fill="#282828"/><path d="M8.000 6.900 H109.800 A1.4 1.4 0 0 1 111.200 8.300 V13.900 A1.4 1.4 0 0 1 109.800 15.300 H8.000 A1.4 1.4 0 0 1 6.600 13.900 V8.300 A1.4 1.4 0 0 1 8.000 6.900 Z" fill="#545454"/></svg>
<div class="t" style="left:572.20px;top:222.10px;font-size:5.6px;color:#dcdcdc;">Anisotropic</div>
<div class="t" style="right:341.80px;top:222.10px;font-size:5.6px;color:#dcdcdc;text-align:right;">0.000</div>
<svg style="left:555px;top:233px" width="9" height="9"><circle cx="4.650" cy="4.600" r="2.35" fill="rgba(0,0,0,0.55)"/><circle cx="4.650" cy="4.600" r="1.95" fill="#b4b4b4"/></svg>
<svg style="left:558px;top:227px" width="118" height="21"><path d="M8.000 7.000 H109.800 A1.4 1.4 0 0 1 111.200 8.400 V14.000 A1.4 1.4 0 0 1 109.800 15.400 H8.000 A1.4 1.4 0 0 1 6.600 14.000 V8.400 A1.4 1.4 0 0 1 8.000 7.000 Z" fill="#282828"/><path d="M8.000 6.400 H109.800 A1.4 1.4 0 0 1 111.200 7.800 V13.400 A1.4 1.4 0 0 1 109.800 14.800 H8.000 A1.4 1.4 0 0 1 6.600 13.400 V7.800 A1.4 1.4 0 0 1 8.000 6.400 Z" fill="#545454"/></svg>
<div class="t" style="left:572.20px;top:232.60px;font-size:5.6px;color:#dcdcdc;">Anisotropic Rotation</div>
<div class="t" style="right:341.80px;top:232.60px;font-size:5.6px;color:#dcdcdc;text-align:right;">0.000</div>
<svg style="left:555px;top:244px" width="9" height="9"><circle cx="4.650" cy="4.100" r="2.35" fill="rgba(0,0,0,0.55)"/><circle cx="4.650" cy="4.100" r="1.95" fill="#b4b4b4"/></svg>
<svg style="left:558px;top:237px" width="118" height="22"><path d="M8.000 7.500 H109.800 A1.4 1.4 0 0 1 111.200 8.900 V14.500 A1.4 1.4 0 0 1 109.800 15.900 H8.000 A1.4 1.4 0 0 1 6.600 14.500 V8.900 A1.4 1.4 0 0 1 8.000 7.500 Z" fill="#282828"/><path d="M8.000 6.900 H109.800 A1.4 1.4 0 0 1 111.200 8.300 V13.900 A1.4 1.4 0 0 1 109.800 15.300 H8.000 A1.4 1.4 0 0 1 6.600 13.900 V8.300 A1.4 1.4 0 0 1 8.000 6.900 Z" fill="#545454"/></svg>
<div class="t" style="left:572.20px;top:243.10px;font-size:5.6px;color:#dcdcdc;">Sheen</div>
<div class="t" style="right:341.80px;top:243.10px;font-size:5.6px;color:#dcdcdc;text-align:right;">0.000</div>
<svg style="left:555px;top:254px" width="9" height="9"><circle cx="4.650" cy="4.100" r="2.35" fill="rgba(0,0,0,0.55)"/><circle cx="4.650" cy="4.100" r="1.95" fill="#b4b4b4"/></svg>
<svg style="left:558px;top:247px" width="118" height="22"><path d="M8.000 7.500 H109.800 A1.4 1.4 0 0 1 111.200 8.900 V14.500 A1.4 1.4 0 0 1 109.800 15.900 H8.000 A1.4 1.4 0 0 1 6.600 14.500 V8.900 A1.4 1.4 0 0 1 8.000 7.500 Z" fill="#282828"/><path d="M8.000 6.900 H109.800 A1.4 1.4 0 0 1 111.200 8.300 V13.900 A1.4 1.4 0 0 1 109.800 15.300 H8.000 A1.4 1.4 0 0 1 6.600 13.900 V8.300 A1.4 1.4 0 0 1 8.000 6.900 Z" fill="#545454"/></svg>
<svg style="left:558px;top:247px" width="64" height="22"><path d="M8.000 6.900 H57.959 V15.300 H8.000 A1.4 1.4 0 0 1 6.600 13.900 V8.300 A1.4 1.4 0 0 1 8.000 6.900 Z" fill="#4772b3"/></svg>
<div class="t" style="left:572.20px;top:253.10px;font-size:5.6px;color:#dcdcdc;">Sheen Tint</div>
<div class="t" style="right:341.80px;top:253.10px;font-size:5.6px;color:#dcdcdc;text-align:right;">0.500</div>
<svg style="left:555px;top:264px" width="9" height="9"><circle cx="4.650" cy="4.600" r="2.35" fill="rgba(0,0,0,0.55)"/><circle cx="4.650" cy="4.600" r="1.95" fill="#b4b4b4"/></svg>
<svg style="left:558px;top:258px" width="118" height="21"><path d="M8.000 7.000 H109.800 A1.4 1.4 0 0 1 111.200 8.400 V14.000 A1.4 1.4 0 0 1 109.800 15.400 H8.000 A1.4 1.4 0 0 1 6.600 14.000 V8.400 A1.4 1.4 0 0 1 8.000 7.000 Z" fill="#282828"/><path d="M8.000 6.400 H109.800 A1.4 1.4 0 0 1 111.200 7.800 V13.400 A1.4 1.4 0 0 1 109.800 14.800 H8.000 A1.4 1.4 0 0 1 6.600 13.400 V7.800 A1.4 1.4 0 0 1 8.000 6.400 Z" fill="#545454"/></svg>
<div class="t" style="left:572.20px;top:263.60px;font-size:5.6px;color:#dcdcdc;">Clearcoat</div>
<div class="t" style="right:341.80px;top:263.60px;font-size:5.6px;color:#dcdcdc;text-align:right;">0.000</div>
<svg style="left:555px;top:275px" width="9" height="9"><circle cx="4.650" cy="4.000" r="2.35" fill="rgba(0,0,0,0.55)"/><circle cx="4.650" cy="4.000" r="1.95" fill="#b4b4b4"/></svg>
<svg style="left:558px;top:268px" width="118" height="22"><path d="M8.000 7.400 H109.800 A1.4 1.4 0 0 1 111.200 8.800 V14.400 A1.4 1.4 0 0 1 109.800 15.800 H8.000 A1.4 1.4 0 0 1 6.600 14.400 V8.800 A1.4 1.4 0 0 1 8.000 7.400 Z" fill="#282828"/><path d="M8.000 6.800 H109.800 A1.4 1.4 0 0 1 111.200 8.200 V13.800 A1.4 1.4 0 0 1 109.800 15.200 H8.000 A1.4 1.4 0 0 1 6.600 13.800 V8.200 A1.4 1.4 0 0 1 8.000 6.800 Z" fill="#545454"/></svg>
<svg style="left:558px;top:268px" width="16" height="22"><path d="M8.000 6.800 H9.529 V15.200 H8.000 A1.4 1.4 0 0 1 6.600 13.800 V8.200 A1.4 1.4 0 0 1 8.000 6.800 Z" fill="#4772b3"/></svg>
<div class="t" style="left:572.20px;top:274.00px;font-size:5.6px;color:#dcdcdc;">Clearcoat Roughness</div>
<div class="t" style="right:341.80px;top:274.00px;font-size:5.6px;color:#dcdcdc;text-align:right;">0.030</div>
<svg style="left:555px;top:285px" width="9" height="9"><circle cx="4.650" cy="4.100" r="2.35" fill="rgba(0,0,0,0.55)"/><circle cx="4.650" cy="4.100" r="1.95" fill="#b4b4b4"/></svg>
<svg style="left:558px;top:278px" width="118" height="22"><path d="M8.000 7.500 H109.800 A1.4 1.4 0 0 1 111.200 8.900 V14.500 A1.4 1.4 0 0 1 109.800 15.900 H8.000 A1.4 1.4 0 0 1 6.600 14.500 V8.900 A1.4 1.4 0 0 1 8.000 7.500 Z" fill="#282828"/><path d="M8.000 6.900 H109.800 A1.4 1.4 0 0 1 111.200 8.300 V13.900 A1.4 1.4 0 0 1 109.800 15.300 H8.000 A1.4 1.4 0 0 1 6.600 13.900 V8.300 A1.4 1.4 0 0 1 8.000 6.900 Z" fill="#545454"/></svg>
<div class="t" style="left:572.20px;top:284.10px;font-size:5.6px;color:#dcdcdc;">IOR</div>
<div class="t" style="right:341.80px;top:284.10px;font-size:5.6px;color:#dcdcdc;text-align:right;">1.450</div>
<svg style="left:555px;top:295px" width="9" height="9"><circle cx="4.650" cy="4.400" r="2.35" fill="rgba(0,0,0,0.55)"/><circle cx="4.650" cy="4.400" r="1.95" fill="#b4b4b4"/></svg>
<svg style="left:558px;top:289px" width="118" height="21"><path d="M8.000 6.800 H109.800 A1.4 1.4 0 0 1 111.200 8.200 V13.800 A1.4 1.4 0 0 1 109.800 15.200 H8.000 A1.4 1.4 0 0 1 6.600 13.800 V8.200 A1.4 1.4 0 0 1 8.000 6.800 Z" fill="#282828"/><path d="M8.000 6.200 H109.800 A1.4 1.4 0 0 1 111.200 7.600 V13.200 A1.4 1.4 0 0 1 109.800 14.600 H8.000 A1.4 1.4 0 0 1 6.600 13.200 V7.600 A1.4 1.4 0 0 1 8.000 6.200 Z" fill="#545454"/></svg>
<div class="t" style="left:572.20px;top:294.40px;font-size:5.6px;color:#dcdcdc;">Transmission</div>
<div class="t" style="right:341.80px;top:294.40px;font-size:5.6px;color:#dcdcdc;text-align:right;">0.000</div>
<svg style="left:555px;top:305px" width="9" height="9"><circle cx="4.650" cy="4.900" r="2.35" fill="rgba(0,0,0,0.55)"/><circle cx="4.650" cy="4.900" r="1.95" fill="#b4b4b4"/></svg>
<svg style="left:558px;top:299px" width="118" height="22"><path d="M8.000 7.300 H109.800 A1.4 1.4 0 0 1 111.200 8.700 V14.300 A1.4 1.4 0 0 1 109.800 15.700 H8.000 A1.4 1.4 0 0 1 6.600 14.300 V8.700 A1.4 1.4 0 0 1 8.000 7.300 Z" fill="#282828"/><path d="M8.000 6.700 H109.800 A1.4 1.4 0 0 1 111.200 8.100 V13.700 A1.4 1.4 0 0 1 109.800 15.100 H8.000 A1.4 1.4 0 0 1 6.600 13.700 V8.100 A1.4 1.4 0 0 1 8.000 6.700 Z" fill="#545454"/></svg>
<div class="t" style="left:572.20px;top:304.90px;font-size:5.6px;color:#dcdcdc;">Transmission Roughness</div>
<div class="t" style="right:341.80px;top:304.90px;font-size:5.6px;color:#dcdcdc;text-align:right;">0.000</div>
<svg style="left:555px;top:316px" width="9" height="9"><circle cx="4.650" cy="4.000" r="2.35" fill="rgba(0,0,0,0.55)"/><circle cx="4.650" cy="4.000" r="1.95" fill="#d0d02c"/></svg>
<div class="t" style="left:564.60px;top:315.00px;font-size:5.6px;color:#dcdcdc;">Emission</div>
<svg style="left:603px;top:309px" width="73" height="22"><path d="M7.400 6.900 H64.800 A1.4 1.4 0 0 1 66.200 8.300 V13.700 A1.4 1.4 0 0 1 64.800 15.100 H7.400 A1.4 1.4 0 0 1 6.000 13.700 V8.300 A1.4 1.4 0 0 1 7.400 6.900 Z" fill="#000000"/></svg>
<svg style="left:555px;top:326px" width="9" height="9"><circle cx="4.650" cy="4.200" r="2.35" fill="rgba(0,0,0,0.55)"/><circle cx="4.650" cy="4.200" r="1.95" fill="#b4b4b4"/></svg>
<svg style="left:558px;top:320px" width="118" height="21"><path d="M8.000 6.600 H109.800 A1.4 1.4 0 0 1 111.200 8.000 V13.600 A1.4 1.4 0 0 1 109.800 15.000 H8.000 A1.4 1.4 0 0 1 6.600 13.600 V8.000 A1.4 1.4 0 0 1 8.000 6.600 Z" fill="#282828"/><path d="M8.000 6.000 H109.800 A1.4 1.4 0 0 1 111.200 7.400 V13.000 A1.4 1.4 0 0 1 109.800 14.400 H8.000 A1.4 1.4 0 0 1 6.600 13.000 V7.400 A1.4 1.4 0 0 1 8.000 6.000 Z" fill="#545454"/></svg>
<div class="t" style="left:572.20px;top:325.20px;font-size:5.6px;color:#dcdcdc;">Emission Strength</div>
<div class="t" style="right:341.80px;top:325.20px;font-size:5.6px;color:#dcdcdc;text-align:right;">1.000</div>
<svg style="left:555px;top:336px" width="9" height="9"><circle cx="4.650" cy="4.700" r="2.35" fill="rgba(0,0,0,0.55)"/><circle cx="4.650" cy="4.700" r="1.95" fill="#b4b4b4"/></svg>
<svg style="left:558px;top:330px" width="118" height="21"><path d="M8.000 7.100 H109.800 A1.4 1.4 0 0 1 111.200 8.500 V14.100 A1.4 1.4 0 0 1 109.800 15.500 H8.000 A1.4 1.4 0 0 1 6.600 14.100 V8.500 A1.4 1.4 0 0 1 8.000 7.100 Z" fill="#282828"/><path d="M8.000 6.500 H109.800 A1.4 1.4 0 0 1 111.200 7.900 V13.500 A1.4 1.4 0 0 1 109.800 14.900 H8.000 A1.4 1.4 0 0 1 6.600 13.500 V7.900 A1.4 1.4 0 0 1 8.000 6.500 Z" fill="#545454"/></svg>
<svg style="left:558px;top:330px" width="118" height="21"><path d="M8.000 6.500 H109.800 A1.4 1.4 0 0 1 111.200 7.900 V13.500 A1.4 1.4 0 0 1 109.800 14.900 H8.000 A1.4 1.4 0 0 1 6.600 13.500 V7.900 A1.4 1.4 0 0 1 8.000 6.500 Z" fill="#4772b3"/></svg>
<div class="t" style="left:572.20px;top:335.70px;font-size:5.6px;color:#dcdcdc;">Alpha</div>
<div class="t" style="right:341.80px;top:335.70px;font-size:5.6px;color:#dcdcdc;text-align:right;">1.000</div>
<svg style="left:555px;top:346px" width="9" height="9"><circle cx="4.650" cy="4.600" r="2.35" fill="rgba(0,0,0,0.55)"/><circle cx="4.650" cy="4.600" r="1.95" fill="#6d6dd6"/></svg>
<div class="t" style="left:564.60px;top:345.60px;font-size:5.6px;color:#dcdcdc;">Normal</div>
<svg style="left:555px;top:357px" width="9" height="9"><circle cx="4.650" cy="4.100" r="2.35" fill="rgba(0,0,0,0.55)"/><circle cx="4.650" cy="4.100" r="1.95" fill="#6d6dd6"/></svg>
<div class="t" style="left:564.60px;top:356.10px;font-size:5.6px;color:#dcdcdc;">Clearcoat Normal</div>
<svg style="left:555px;top:367px" width="9" height="9"><circle cx="4.650" cy="4.400" r="2.35" fill="rgba(0,0,0,0.55)"/><circle cx="4.650" cy="4.400" r="1.95" fill="#6d6dd6"/></svg>
<div class="t" style="left:564.60px;top:366.40px;font-size:5.6px;color:#dcdcdc;">Tangent</div>
<div style="position:absolute;left:467.10px;top:322.90px;width:66.30px;height:79.90px;border-radius:2.5px;box-shadow:0 1px 4px rgba(0,0,0,0.45)"></div>
<svg style="left:460px;top:315px" width="81" height="95"><path d="M9.400 6.800 H71.100 A3.4 3.4 0 0 1 74.500 10.200 V85.500 A3.4 3.4 0 0 1 71.100 88.900 H9.400 A3.4 3.4 0 0 1 6.000 85.500 V10.200 A3.4 3.4 0 0 1 9.400 6.800 Z" fill="#151515"/></svg>
<svg style="left:461px;top:316px" width="79" height="93"><path d="M8.500 6.900 H70.000 A2.4 2.4 0 0 1 72.400 9.300 V84.400 A2.4 2.4 0 0 1 70.000 86.800 H8.500 A2.4 2.4 0 0 1 6.100 84.400 V9.300 A2.4 2.4 0 0 1 8.500 6.900 Z" fill="#303030"/></svg>
<svg style="left:461px;top:316px" width="79" height="23"><path d="M8.500 6.900 H70.000 A2.4 2.4 0 0 1 72.400 9.300 V16.200 H6.100 V9.300 A2.4 2.4 0 0 1 8.500 6.900 Z" fill="#3c3c80"/></svg>
<svg style="left:470px;top:323px" width="9" height="9"><path d="M2.600 3.200 L4.700 5.300 L6.800 3.200" fill="none" stroke="#d8d8d8" stroke-width="1.0" stroke-linecap="round" stroke-linejoin="round"/></svg>
<div class="t" style="left:478.60px;top:321.85px;font-size:5.6px;color:#e2e2e2;">Bump</div>
<div class="t" style="right:476.30px;top:334.40px;font-size:5.6px;color:#dcdcdc;text-align:right;">Normal</div>
<svg style="left:528px;top:335px" width="9" height="9"><circle cx="4.950" cy="4.400" r="2.35" fill="rgba(0,0,0,0.55)"/><circle cx="4.950" cy="4.400" r="1.95" fill="#6d6dd6"/></svg>
<svg style="left:465px;top:344px" width="20" height="19"><path d="M8.300 6.000 H12.100 A1.5 1.5 0 0 1 13.600 7.500 V11.200 A1.5 1.5 0 0 1 12.100 12.700 H8.300 A1.5 1.5 0 0 1 6.800 11.200 V7.500 A1.5 1.5 0 0 1 8.300 6.000 Z" fill="#545454"/></svg>
<div class="t" style="left:479.90px;top:348.40px;font-size:5.6px;color:#dcdcdc;">Invert</div>
<svg style="left:462px;top:361px" width="9" height="9"><circle cx="4.650" cy="4.000" r="2.35" fill="rgba(0,0,0,0.55)"/><circle cx="4.650" cy="4.000" r="1.95" fill="#b4b4b4"/></svg>
<svg style="left:465px;top:354px" width="70" height="22"><path d="M8.200 7.400 H61.800 A1.4 1.4 0 0 1 63.200 8.800 V14.400 A1.4 1.4 0 0 1 61.800 15.800 H8.200 A1.4 1.4 0 0 1 6.800 14.400 V8.800 A1.4 1.4 0 0 1 8.200 7.400 Z" fill="#282828"/><path d="M8.200 6.800 H61.800 A1.4 1.4 0 0 1 63.200 8.200 V13.800 A1.4 1.4 0 0 1 61.800 15.200 H8.200 A1.4 1.4 0 0 1 6.800 13.800 V8.200 A1.4 1.4 0 0 1 8.200 6.800 Z" fill="#545454"/></svg>
<svg style="left:465px;top:354px" width="70" height="22"><path d="M8.200 6.800 H61.800 A1.4 1.4 0 0 1 63.200 8.200 V13.800 A1.4 1.4 0 0 1 61.800 15.200 H8.200 A1.4 1.4 0 0 1 6.800 13.800 V8.200 A1.4 1.4 0 0 1 8.200 6.800 Z" fill="#4772b3"/></svg>
<div class="t" style="left:479.40px;top:360.00px;font-size:5.6px;color:#dcdcdc;">Strength</div>
<div class="t" style="right:482.80px;top:360.00px;font-size:5.6px;color:#dcdcdc;text-align:right;">1.000</div>
<svg style="left:462px;top:371px" width="9" height="9"><circle cx="4.650" cy="4.500" r="2.35" fill="rgba(0,0,0,0.55)"/><circle cx="4.650" cy="4.500" r="1.95" fill="#b4b4b4"/></svg>
<svg style="left:465px;top:365px" width="70" height="21"><path d="M8.200 6.900 H61.800 A1.4 1.4 0 0 1 63.200 8.300 V13.900 A1.4 1.4 0 0 1 61.800 15.300 H8.200 A1.4 1.4 0 0 1 6.800 13.900 V8.300 A1.4 1.4 0 0 1 8.200 6.900 Z" fill="#282828"/><path d="M8.200 6.300 H61.800 A1.4 1.4 0 0 1 63.200 7.700 V13.300 A1.4 1.4 0 0 1 61.800 14.700 H8.200 A1.4 1.4 0 0 1 6.800 13.300 V7.700 A1.4 1.4 0 0 1 8.200 6.300 Z" fill="#545454"/></svg>
<div class="t" style="left:479.40px;top:370.50px;font-size:5.6px;color:#dcdcdc;">Distance</div>
<div class="t" style="right:482.80px;top:370.50px;font-size:5.6px;color:#dcdcdc;text-align:right;">1.000</div>
<svg style="left:462px;top:381px" width="9" height="9"><circle cx="4.650" cy="4.700" r="2.35" fill="rgba(0,0,0,0.55)"/><circle cx="4.650" cy="4.700" r="1.95" fill="#b4b4b4"/></svg>
<div class="t" style="left:472.20px;top:380.70px;font-size:5.6px;color:#dcdcdc;">Height</div>
<svg style="left:462px;top:392px" width="9" height="9"><circle cx="4.650" cy="4.100" r="2.35" fill="rgba(0,0,0,0.55)"/><circle cx="4.650" cy="4.100" r="1.95" fill="#6d6dd6"/></svg>
<div class="t" style="left:472.20px;top:391.10px;font-size:5.6px;color:#dcdcdc;">Normal</div>
<div style="position:absolute;left:463.90px;top:427.90px;width:66.10px;height:79.90px;border-radius:2.5px;box-shadow:0 1px 4px rgba(0,0,0,0.45)"></div>
<svg style="left:456px;top:420px" width="82" height="95"><path d="M10.200 6.800 H71.700 A3.4 3.4 0 0 1 75.100 10.200 V85.500 A3.4 3.4 0 0 1 71.700 88.900 H10.200 A3.4 3.4 0 0 1 6.800 85.500 V10.200 A3.4 3.4 0 0 1 10.200 6.800 Z" fill="#151515"/></svg>
<svg style="left:457px;top:421px" width="79" height="93"><path d="M9.300 6.900 H70.600 A2.4 2.4 0 0 1 73.000 9.300 V84.400 A2.4 2.4 0 0 1 70.600 86.800 H9.300 A2.4 2.4 0 0 1 6.900 84.400 V9.300 A2.4 2.4 0 0 1 9.300 6.900 Z" fill="#303030"/></svg>
<svg style="left:457px;top:421px" width="79" height="23"><path d="M9.300 6.900 H70.600 A2.4 2.4 0 0 1 73.000 9.300 V16.200 H6.900 V9.300 A2.4 2.4 0 0 1 9.300 6.900 Z" fill="#3c3c80"/></svg>
<svg style="left:467px;top:428px" width="9" height="9"><path d="M2.400 3.200 L4.500 5.300 L6.600 3.200" fill="none" stroke="#d8d8d8" stroke-width="1.0" stroke-linecap="round" stroke-linejoin="round"/></svg>
<div class="t" style="left:475.40px;top:426.85px;font-size:5.6px;color:#e2e2e2;">Displacement</div>
<div class="t" style="right:480.20px;top:439.10px;font-size:5.6px;color:#dcdcdc;text-align:right;">Displacement</div>
<svg style="left:525px;top:440px" width="9" height="9"><circle cx="4.550" cy="4.100" r="2.35" fill="rgba(0,0,0,0.55)"/><circle cx="4.550" cy="4.100" r="1.95" fill="#6d6dd6"/></svg>
<svg style="left:462px;top:448px" width="69" height="21"><path d="M8.800 6.400 H60.300 A2 2 0 0 1 62.300 8.400 V12.200 A2 2 0 0 1 60.300 14.200 H8.800 A2 2 0 0 1 6.800 12.200 V8.400 A2 2 0 0 1 8.800 6.400 Z" fill="#282828"/></svg>
<div class="t" style="left:472.30px;top:453.30px;font-size:5.6px;color:#dcdcdc;">Object Space</div>
<svg style="left:517px;top:454px" width="9" height="9"><path d="M2.450 4.025 L4.000 5.575 L5.550 4.025" fill="none" stroke="#d0d0d0" stroke-width="1.0" stroke-linecap="round" stroke-linejoin="round"/></svg>
<svg style="left:459px;top:466px" width="9" height="9"><circle cx="4.450" cy="4.000" r="2.35" fill="rgba(0,0,0,0.55)"/><circle cx="4.450" cy="4.000" r="1.95" fill="#b4b4b4"/></svg>
<div class="t" style="left:468.10px;top:465.00px;font-size:5.6px;color:#dcdcdc;">Height</div>
<svg style="left:459px;top:476px" width="9" height="9"><circle cx="4.450" cy="4.000" r="2.35" fill="rgba(0,0,0,0.55)"/><circle cx="4.450" cy="4.000" r="1.95" fill="#b4b4b4"/></svg>
<svg style="left:462px;top:469px" width="69" height="22"><path d="M7.500 7.400 H61.400 A1.4 1.4 0 0 1 62.800 8.800 V14.400 A1.4 1.4 0 0 1 61.400 15.800 H7.500 A1.4 1.4 0 0 1 6.100 14.400 V8.800 A1.4 1.4 0 0 1 7.500 7.400 Z" fill="#282828"/><path d="M7.500 6.800 H61.400 A1.4 1.4 0 0 1 62.800 8.200 V13.800 A1.4 1.4 0 0 1 61.400 15.200 H7.500 A1.4 1.4 0 0 1 6.100 13.800 V8.200 A1.4 1.4 0 0 1 7.500 6.800 Z" fill="#545454"/></svg>
<div class="t" style="left:475.70px;top:475.00px;font-size:5.6px;color:#dcdcdc;">Midlevel</div>
<div class="t" style="right:486.20px;top:475.00px;font-size:5.6px;color:#dcdcdc;text-align:right;">0.000</div>
<svg style="left:459px;top:486px" width="9" height="9"><circle cx="4.450" cy="4.300" r="2.35" fill="rgba(0,0,0,0.55)"/><circle cx="4.450" cy="4.300" r="1.95" fill="#b4b4b4"/></svg>
<svg style="left:462px;top:480px" width="69" height="21"><path d="M7.500 6.700 H61.400 A1.4 1.4 0 0 1 62.800 8.100 V13.700 A1.4 1.4 0 0 1 61.400 15.100 H7.500 A1.4 1.4 0 0 1 6.100 13.700 V8.100 A1.4 1.4 0 0 1 7.500 6.700 Z" fill="#282828"/><path d="M7.500 6.100 H61.400 A1.4 1.4 0 0 1 62.800 7.500 V13.100 A1.4 1.4 0 0 1 61.400 14.500 H7.500 A1.4 1.4 0 0 1 6.100 13.100 V7.500 A1.4 1.4 0 0 1 7.500 6.100 Z" fill="#545454"/></svg>
<div class="t" style="left:475.70px;top:485.30px;font-size:5.6px;color:#dcdcdc;">Scale</div>
<div class="t" style="right:486.20px;top:485.30px;font-size:5.6px;color:#dcdcdc;text-align:right;">1.000</div>
<svg style="left:459px;top:497px" width="9" height="9"><circle cx="4.450" cy="4.100" r="2.35" fill="rgba(0,0,0,0.55)"/><circle cx="4.450" cy="4.100" r="1.95" fill="#6d6dd6"/></svg>
<div class="t" style="left:468.10px;top:496.10px;font-size:5.6px;color:#dcdcdc;">Normal</div>
<div style="position:absolute;left:719.00px;top:364.00px;width:66.00px;height:56.00px;border-radius:2.5px;box-shadow:0 1px 4px rgba(0,0,0,0.45)"></div>
<svg style="left:711px;top:356px" width="82" height="72"><path d="M10.300 6.900 H71.700 A3.4 3.4 0 0 1 75.100 10.300 V61.700 A3.4 3.4 0 0 1 71.700 65.100 H10.300 A3.4 3.4 0 0 1 6.900 61.700 V10.300 A3.4 3.4 0 0 1 10.300 6.900 Z" fill="#151515"/></svg>
<svg style="left:713px;top:358px" width="78" height="68"><path d="M8.400 6.000 H69.600 A2.4 2.4 0 0 1 72.000 8.400 V59.600 A2.4 2.4 0 0 1 69.600 62.000 H8.400 A2.4 2.4 0 0 1 6.000 59.600 V8.400 A2.4 2.4 0 0 1 8.400 6.000 Z" fill="#303030"/></svg>
<svg style="left:713px;top:358px" width="78" height="22"><path d="M8.400 6.000 H69.600 A2.4 2.4 0 0 1 72.000 8.400 V15.100 H6.000 V8.400 A2.4 2.4 0 0 1 8.400 6.000 Z" fill="#3d1e26"/></svg>
<svg style="left:722px;top:364px" width="9" height="9"><path d="M2.500 3.200 L4.600 5.300 L6.700 3.200" fill="none" stroke="#d8d8d8" stroke-width="1.0" stroke-linecap="round" stroke-linejoin="round"/></svg>
<div class="t" style="left:730.50px;top:362.85px;font-size:5.6px;color:#e2e2e2;">Material Output</div>
<svg style="left:717px;top:370px" width="69" height="20"><path d="M8.600 6.450 H60.700 A2 2 0 0 1 62.700 8.450 V11.750 A2 2 0 0 1 60.700 13.750 H8.600 A2 2 0 0 1 6.600 11.750 V8.450 A2 2 0 0 1 8.600 6.450 Z" fill="#282828"/></svg>
<div class="t" style="left:727.10px;top:375.10px;font-size:5.6px;color:#dcdcdc;">All</div>
<svg style="left:772px;top:376px" width="9" height="9"><path d="M2.850 3.825 L4.400 5.375 L5.950 3.825" fill="none" stroke="#d0d0d0" stroke-width="1.0" stroke-linecap="round" stroke-linejoin="round"/></svg>
<svg style="left:714px;top:387px" width="9" height="9"><circle cx="4.550" cy="4.500" r="2.35" fill="rgba(0,0,0,0.55)"/><circle cx="4.550" cy="4.500" r="1.95" fill="#66cc66"/></svg>
<div class="t" style="left:723.60px;top:386.50px;font-size:5.6px;color:#dcdcdc;">Surface</div>
<svg style="left:714px;top:397px" width="9" height="9"><circle cx="4.550" cy="4.900" r="2.35" fill="rgba(0,0,0,0.55)"/><circle cx="4.550" cy="4.900" r="1.95" fill="#66cc66"/></svg>
<div class="t" style="left:723.60px;top:396.90px;font-size:5.6px;color:#dcdcdc;">Volume</div>
<svg style="left:714px;top:408px" width="9" height="9"><circle cx="4.550" cy="4.400" r="2.35" fill="rgba(0,0,0,0.55)"/><circle cx="4.550" cy="4.400" r="1.95" fill="#6d6dd6"/></svg>
<div class="t" style="left:723.60px;top:407.40px;font-size:5.6px;color:#dcdcdc;">Displacement</div>
<svg style="left:-1px;top:542px" width="1006" height="15"><path d="M7.800 6.300 H999.000 A1 1 0 0 1 1000.000 7.300 V7.400 A1 1 0 0 1 999.000 8.400 H7.800 A1 1 0 0 1 6.800 7.400 V7.300 A1 1 0 0 1 7.800 6.300 Z" fill="#3a3a3a"/></svg>
<svg style="left:995px;top:33px" width="15" height="519"><path d="M7.400 6.800 H7.400 A1.4 1.4 0 0 1 8.800 8.200 V511.200 A1.4 1.4 0 0 1 7.400 512.600 H7.400 A1.4 1.4 0 0 1 6.000 511.200 V8.200 A1.4 1.4 0 0 1 7.400 6.800 Z" fill="#303030"/></svg>
<svg style="left:1000.5px;top:46px" width="4" height="6" viewBox="0 0 4 6"><path d="M3.5 0.5 L1 3 L3.5 5.5" fill="none" stroke="#cfcfcf" stroke-width="0.8"/></svg>
<svg style="left:-6px;top:545px" width="1017" height="26"><path d="M6.000 6.000 H1011.000 V20.000 H6.000 V6.000 Z" fill="#1a1a1a"/></svg>
<svg style="left:7.3px;top:553.9px" width="8" height="10" viewBox="0 0 8 10">
<rect x="0.5" y="0.5" width="7" height="9" rx="2.2" fill="none" stroke="#bdbdbd" stroke-width="0.8"/><path d="M4 0.5 H2.5 A2 2 0 0 0 0.5 2.5 V4.5 H4 Z" fill="#bdbdbd"/></svg>
<svg style="left:154.6px;top:553.9px" width="8" height="10" viewBox="0 0 8 10">
<rect x="0.5" y="0.5" width="7" height="9" rx="2.2" fill="none" stroke="#bdbdbd" stroke-width="0.8"/><rect x="3.3" y="2" width="1.4" height="2.6" fill="#d0d0d0"/></svg>
<svg style="left:301.8px;top:553.9px" width="8" height="10" viewBox="0 0 8 10">
<rect x="0.5" y="0.5" width="7" height="9" rx="2.2" fill="none" stroke="#bdbdbd" stroke-width="0.8"/><path d="M4 0.5 H5.5 A2 2 0 0 1 7.5 2.5 V4.5 H4 Z" fill="#bdbdbd"/></svg>
<div class="t" style="right:5.00px;top:553.30px;font-size:7.6px;color:#8c8c8c;text-align:right;">3.3.0</div>
</body></html>
